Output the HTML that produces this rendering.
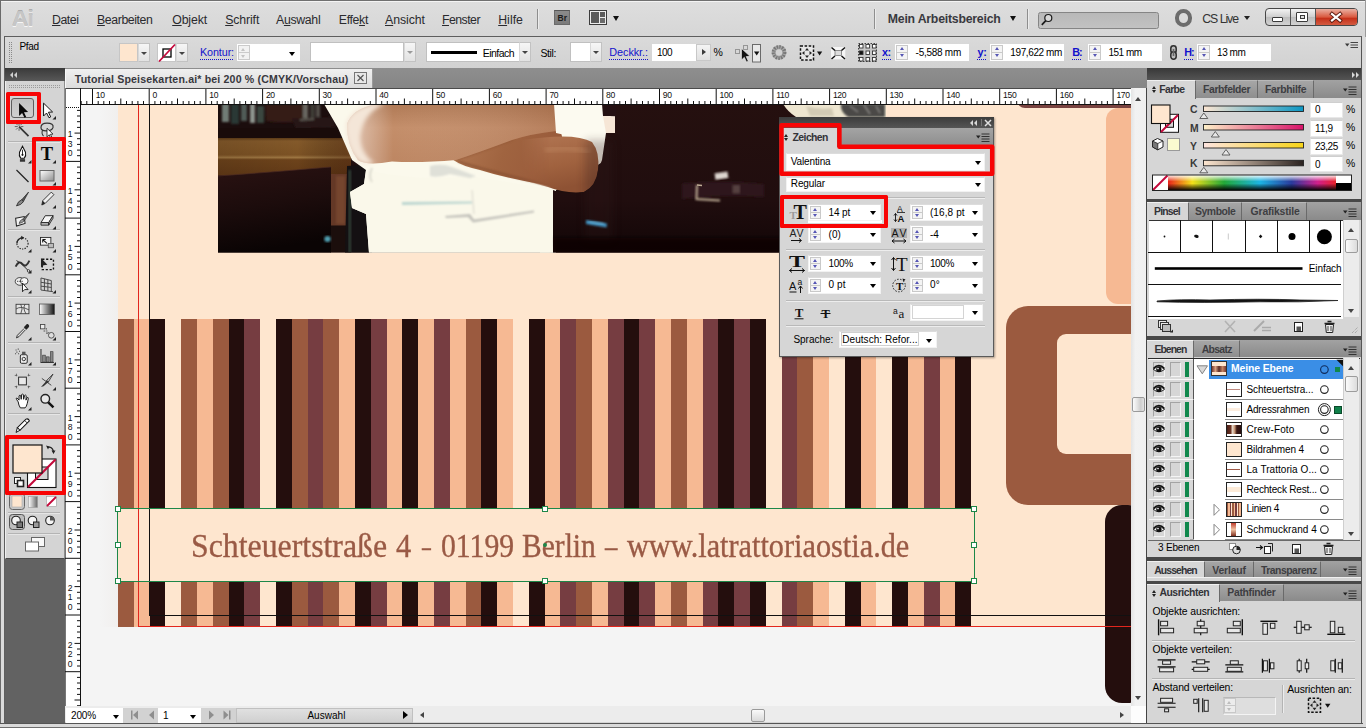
<!DOCTYPE html><html lang="de"><head><meta charset="utf-8"><title>Tutorial Speisekarten.ai</title><style>
*{box-sizing:border-box;margin:0;padding:0}
html,body{width:1366px;height:728px;overflow:hidden;background:#d6d6d6;font-family:"Liberation Sans",sans-serif;font-size:10px;color:#000}
.a{position:absolute}
#app{position:absolute;left:0;top:0;width:1366px;height:728px;overflow:hidden;background:#d4d4d4}
.t{position:absolute;white-space:nowrap;line-height:1}
.red{position:absolute;border:4px solid #f90505;border-radius:2px}
svg{position:absolute;overflow:visible}
u{text-decoration:underline;text-underline-offset:1px}
</style></head><body><div id="app">
<div class="a" style="left:0px;top:0px;width:1366px;height:728px;background:#d4d4d4;"></div>
<div class="a" style="left:0px;top:0px;width:1366px;height:36px;background:linear-gradient(#dedede,#d6d6d6);"></div>
<div class="a" style="left:0px;top:0px;width:1366px;height:1px;background:#707070;"></div>
<div class="a" style="left:0px;top:1px;width:1366px;height:1px;background:#f4f4f4;"></div>
<div class="a" style="left:0px;top:35.6px;width:1366px;height:1.2px;background:#5e5e5e;"></div>
<div class="t" style="left:12px;top:7.500px;font-size:22.500px;font-weight:bold;color:#c6c6c6;letter-spacing:-0.8px;text-shadow:0 1px 0 #f6f6f6,0 -1px 0 #acacac">Ai</div>
<div class="t" style="left:52px;top:14.38px;font-size:12.3px;color:#2a2a2e;letter-spacing:-0.463px;"><u>D</u>atei</div>
<div class="t" style="left:97px;top:14.38px;font-size:12.3px;color:#2a2a2e;letter-spacing:-0.400px;"><u>B</u>earbeiten</div>
<div class="t" style="left:172.2px;top:14.38px;font-size:12.3px;color:#2a2a2e;letter-spacing:-0.125px;"><u>O</u>bjekt</div>
<div class="t" style="left:225.2px;top:14.38px;font-size:12.3px;color:#2a2a2e;letter-spacing:-0.123px;"><u>S</u>chrift</div>
<div class="t" style="left:276px;top:14.38px;font-size:12.3px;color:#2a2a2e;letter-spacing:-0.313px;">A<u>u</u>swahl</div>
<div class="t" style="left:338.8px;top:14.38px;font-size:12.3px;color:#2a2a2e;letter-spacing:-0.337px;">Effe<u>k</u>t</div>
<div class="t" style="left:385px;top:14.38px;font-size:12.3px;color:#2a2a2e;letter-spacing:-0.048px;"><u>A</u>nsicht</div>
<div class="t" style="left:442px;top:14.38px;font-size:12.3px;color:#2a2a2e;letter-spacing:-0.529px;"><u>F</u>enster</div>
<div class="t" style="left:498.2px;top:14.38px;font-size:12.3px;color:#2a2a2e;letter-spacing:0.039px;"><u>H</u>ilfe</div>
<div class="a" style="left:537px;top:9px;width:1px;height:20px;background:#8e8e8e;"></div>
<div class="a" style="left:538px;top:9px;width:1px;height:20px;background:#ececec;"></div>
<div class="a" style="left:554px;top:10px;width:16px;height:15px;background:linear-gradient(#8b8b8b,#7a7a7a);border:1px solid #6a6a6a;border-top-color:#555"></div>
<div class="t" style="left:557.5px;top:13.94px;font-size:8.5px;font-weight:bold;color:#1c1c1c;letter-spacing:0.027px;">Br</div>
<svg style="left:589px;top:10px" width="18" height="15"><rect x="0.5" y="0.5" width="17" height="14" fill="#ececec" stroke="#3c3c3c"/><rect x="2" y="2" width="8" height="11" fill="#5a5a5a"/><rect x="11" y="2" width="5" height="5" fill="#5a5a5a"/><rect x="11" y="8" width="5" height="5" fill="#6a6a6a"/></svg>
<div class="a" style="left:613px;top:16px;width:0;height:0;border-left:3.75px solid transparent;border-right:3.75px solid transparent;border-top:5px solid #111"></div>
<div class="a" style="left:873.5px;top:9px;width:1px;height:20px;background:#8e8e8e;"></div>
<div class="a" style="left:874.5px;top:9px;width:1px;height:20px;background:#ececec;"></div>
<div class="t" style="left:887.8px;top:13.08px;font-size:12.3px;font-weight:bold;color:#393940;letter-spacing:-0.227px;">Mein Arbeitsbereich</div>
<div class="a" style="left:1009.8px;top:16px;width:0;height:0;border-left:3.75px solid transparent;border-right:3.75px solid transparent;border-top:5px solid #111"></div>
<div class="a" style="left:1027px;top:9px;width:1px;height:20px;background:#8e8e8e;"></div>
<div class="a" style="left:1028px;top:9px;width:1px;height:20px;background:#ececec;"></div>
<div class="a" style="left:1038px;top:11.5px;width:121px;height:17px;background:linear-gradient(#b8b8b8,#c2c2c2);border:1px solid #858585;border-radius:2.500px"></div>
<svg style="left:1040px;top:12px" width="14" height="15"><circle cx="8.300" cy="6" r="3.500" fill="#d8d8d8" stroke="#1a1a1a" stroke-width="1.200"/><path d="M5.800 8.600 L1.800 12.800" stroke="#1a1a1a" stroke-width="1.700"/></svg>
<div class="a" style="left:1174.500px;top:9px;width:17.500px;height:17.500px;border:4px solid #6c6c6c;border-radius:9px"></div>
<div class="t" style="left:1202.3px;top:13.08px;font-size:12.3px;color:#333;letter-spacing:-1.053px;">CS Live</div>
<div class="a" style="left:1244px;top:15.5px;width:0;height:0;border-left:3.75px solid transparent;border-right:3.75px solid transparent;border-top:4.5px solid #222"></div>
<div class="a" style="left:1265px;top:8px;width:93px;height:18px;border:1px solid #474747;border-radius:4px;background:linear-gradient(#f2f2f2,#d0d0d0 48%,#bdbdbd 52%,#d2d2d2);overflow:hidden"><div class="a" style="left:24px;top:0;width:1px;height:18px;background:#555"></div><div class="a" style="left:49px;top:0;width:43px;height:18px;background:linear-gradient(#eab0a2,#d9593f 45%,#c5311a 52%,#d8674c);border-left:1px solid #555"></div></div>
<div class="a" style="left:1272px;top:16.5px;width:11px;height:5px;background:#fff;border:1px solid #3a3a3a;border-radius:1px"></div>
<div class="a" style="left:1296px;top:11.5px;width:12px;height:10px;background:#fff;border:1px solid #3a3a3a;border-radius:1px"></div>
<div class="a" style="left:1299.5px;top:14.5px;width:5px;height:4px;background:#e0e0e0;border:1px solid #3a3a3a"></div>
<svg style="left:1329px;top:11px" width="14" height="12"><path d="M3 3 L11 9.500 M11 3 L3 9.500" stroke="#5a1a10" stroke-width="4" stroke-linecap="square"/><path d="M3 3 L11 9.500 M11 3 L3 9.500" stroke="#fff" stroke-width="2.200" stroke-linecap="square"/></svg>
<div class="a" style="left:0px;top:0px;width:1px;height:728px;background:#6a6a6a;"></div>
<div class="a" style="left:1px;top:36px;width:3px;height:692px;background:#dadada;"></div>
<div class="a" style="left:1362px;top:36px;width:4px;height:692px;background:#dadada;"></div>
<div class="a" style="left:1365px;top:0px;width:1px;height:728px;background:#9a9a9a;"></div>
<div class="a" style="left:4px;top:36.7px;width:1358px;height:31px;background:linear-gradient(#dadada,#d2d2d2);border-left:1px solid #8a8a8a"></div>
<div class="a" style="left:4px;top:67.5px;width:1358px;height:1px;background:#9a9a9a;"></div>
<div class="a" style="left:9px;top:42px;width:4px;height:22px;background:repeating-linear-gradient(0deg,#d6d6d6 0 1px,transparent 1px 2px),repeating-linear-gradient(90deg,#8a8a8a 0 1px,transparent 1px 2px)"></div>
<div class="t" style="left:19.4px;top:41.80px;font-size:10px;color:#000;letter-spacing:-0.318px;">Pfad</div>
<div class="a" style="left:118.7px;top:42.8px;width:19.5px;height:19.5px;background:#fee6cf;border:1px solid #c6c6c6"></div>
<div class="a" style="left:138.2px;top:42.8px;width:12px;height:19.5px;background:linear-gradient(#f6f6f6,#e2e2e2);border:1px solid #c2c2c2;border-left-color:#d8d8d8"></div>
<div class="a" style="left:141.2px;top:51.55px;width:0;height:0;border-left:3px solid transparent;border-right:3px solid transparent;border-top:3.5px solid #444"></div>
<div class="a" style="left:156.6px;top:42.8px;width:19.5px;height:19.5px;background:#fff;border:1px solid #c6c6c6"></div>
<svg style="left:156.600px;top:42.800px" width="20" height="20"><rect x="6" y="6" width="8" height="8" fill="none" stroke="#000" stroke-width="1.300"/><path d="M2 18.500 L18 1.500" stroke="#c4093b" stroke-width="1.800"/></svg>
<div class="a" style="left:176.1px;top:42.8px;width:12px;height:19.5px;background:linear-gradient(#f6f6f6,#e2e2e2);border:1px solid #c2c2c2;border-left-color:#d8d8d8"></div>
<div class="a" style="left:179.1px;top:51.55px;width:0;height:0;border-left:3px solid transparent;border-right:3px solid transparent;border-top:3.5px solid #444"></div>
<div class="t" style="left:200px;top:47.23px;font-size:10.8px;color:#1212cc;letter-spacing:-0.117px;">Kontur:</div>
<div class="a" style="left:200px;top:58.500px;width:34px;height:1px;background-image:linear-gradient(90deg,#1212cc 1px,transparent 1px);background-size:2px 1px"></div>
<div class="a" style="left:236.8px;top:43.6px;width:63.5px;height:17.6px;background:#fff;"></div>
<div class="a" style="left:237.8px;top:44.6px;width:12px;height:15.6px;background:#f2f2f2;border:1px solid #cbcbcb"></div>
<div class="a" style="left:238.8px;top:52px;width:10px;height:1px;background:#cbcbcb;"></div>
<div class="a" style="left:241px;top:47.5px;width:0;height:0;border-left:2.5px solid transparent;border-right:2.5px solid transparent;border-bottom:3px solid #c4c4c4"></div>
<div class="a" style="left:241px;top:54.5px;width:0;height:0;border-left:2.5px solid transparent;border-right:2.5px solid transparent;border-top:3px solid #c4c4c4"></div>
<div class="a" style="left:288.5px;top:52px;width:0;height:0;border-left:3.75px solid transparent;border-right:3.75px solid transparent;border-top:4.5px solid #000"></div>
<div class="a" style="left:310.4px;top:42.4px;width:93.2px;height:20px;background:#fff;border:1px solid #c0c0c0"></div>
<div class="a" style="left:403.5px;top:42.4px;width:12px;height:20px;background:linear-gradient(#f6f6f6,#e2e2e2);border:1px solid #c2c2c2;border-left-color:#d8d8d8"></div>
<div class="a" style="left:406.5px;top:51.4px;width:0;height:0;border-left:3px solid transparent;border-right:3px solid transparent;border-top:3.5px solid #9a9a9a"></div>
<div class="a" style="left:425.5px;top:42.4px;width:94px;height:20px;background:#fff;border:1px solid #c0c0c0"></div>
<div class="a" style="left:431px;top:51px;width:45.5px;height:3px;background:#000;"></div>
<div class="t" style="left:482.7px;top:47.68px;font-size:10.5px;color:#000;letter-spacing:-0.532px;">Einfach</div>
<div class="a" style="left:519.3px;top:42.4px;width:12px;height:20px;background:linear-gradient(#f6f6f6,#e2e2e2);border:1px solid #c2c2c2;border-left-color:#d8d8d8"></div>
<div class="a" style="left:522.3px;top:51.4px;width:0;height:0;border-left:3px solid transparent;border-right:3px solid transparent;border-top:3.5px solid #444"></div>
<div class="t" style="left:540.5px;top:47.68px;font-size:10.5px;color:#000;letter-spacing:-0.401px;">Stil:</div>
<div class="a" style="left:569.5px;top:42.4px;width:21px;height:20px;background:#fff;border:1px solid #c0c0c0"></div>
<div class="a" style="left:590px;top:42.4px;width:12px;height:20px;background:linear-gradient(#f6f6f6,#e2e2e2);border:1px solid #c2c2c2;border-left-color:#d8d8d8"></div>
<div class="a" style="left:593px;top:51.4px;width:0;height:0;border-left:3px solid transparent;border-right:3px solid transparent;border-top:3.5px solid #444"></div>
<div class="t" style="left:609.3px;top:47.23px;font-size:10.8px;color:#1212cc;letter-spacing:-0.039px;">Deckkr.:</div>
<div class="a" style="left:609.3px;top:58.500px;width:38.7px;height:1px;background-image:linear-gradient(90deg,#1212cc 1px,transparent 1px);background-size:2px 1px"></div>
<div class="a" style="left:651.9px;top:43.6px;width:44px;height:17.6px;background:#fff;"></div>
<div class="t" style="left:657px;top:47.90px;font-size:10px;color:#000;letter-spacing:-0.562px;">100</div>
<div class="a" style="left:695.6px;top:43.6px;width:15.5px;height:17.6px;background:linear-gradient(#f4f4f4,#e0e0e0);border:1px solid #c8c8c8"></div>
<div class="a" style="left:701.5px;top:48.5px;width:0;height:0;border-top:3.5px solid transparent;border-bottom:3.5px solid transparent;border-left:4.5px solid #3a3a3a"></div>
<div class="t" style="left:713.6px;top:47.48px;font-size:10.5px;color:#000;letter-spacing:-0.436px;">%</div>
<svg style="left:730px;top:40px" width="150" height="26"><g fill="none" stroke="#555" stroke-width="1"><rect x="5.500" y="9.500" width="4" height="4" stroke-dasharray="1 1"/><rect x="13.500" y="5.500" width="4" height="4" stroke-dasharray="1 1"/></g><path d="M11.500 8.500 L11.500 20 L14.300 17.300 L16.500 22 L18.300 21.200 L16.200 16.600 L20 16.300 Z" fill="#111" stroke="#eee" stroke-width="0.600"/><rect x="22.500" y="4.500" width="8" height="17.500" fill="#e9e9e9" stroke="#6a6a6a"/><path d="M24 11.500h5.400l-2.700 4z" fill="#111"/><circle cx="49" cy="12.500" r="7.300" fill="#a6a6a6"/><circle cx="49" cy="12.500" r="5.600" fill="none" stroke="#777" stroke-width="3.600" stroke-dasharray="1.400 1.200"/><circle cx="49" cy="12.500" r="3.200" fill="#d2d2d2"/><rect x="70.500" y="6" width="13" height="14" fill="#e6e6e6" stroke="#111" stroke-width="1.500" stroke-dasharray="2.500 1.600"/><path d="M77 8l2 2.500h-4zM77 18l2-2.500h-4zM72 13l2.500-2v4zM82 13l-2.500-2v4z" fill="#222"/><path d="M87 11.500h5.200l-2.600 4z" fill="#111"/><rect x="101" y="7" width="14.300" height="12.300" fill="#f6f6f6"/><rect x="105" y="10.500" width="6.500" height="5" fill="#ddd" stroke="#777" stroke-width="0.800"/><path d="M101.500 7.500l3.500 3M115 7.500l-3.500 3M101.500 19l3.500-3M115 19l-3.500-3" stroke="#111" stroke-width="1.500"/><g fill="#fff" stroke="#333" stroke-width="0.900"><rect x="128.500" y="3.500" width="18" height="18" fill="#c6c6c6" stroke-dasharray="1.500 1.500"/><rect x="129.5" y="4.5" width="3.500" height="3.500"/><rect x="129.5" y="11" width="3.500" height="3.500" fill="#111"/><rect x="129.5" y="17.5" width="3.500" height="3.500"/><rect x="136" y="4.5" width="3.500" height="3.500"/><rect x="136" y="11" width="3.500" height="3.500"/><rect x="136" y="17.5" width="3.500" height="3.500"/><rect x="142.5" y="4.5" width="3.500" height="3.500"/><rect x="142.5" y="11" width="3.500" height="3.500"/><rect x="142.5" y="17.5" width="3.500" height="3.500"/></g></svg>
<div class="t" style="left:882px;top:47.23px;font-size:10.8px;font-weight:bold;color:#1212cc;letter-spacing:-0.452px;">x:</div>
<div class="a" style="left:882px;top:58.500px;width:8.7px;height:1px;background-image:linear-gradient(90deg,#1212cc 1px,transparent 1px);background-size:2px 1px"></div>
<div class="a" style="left:895.3px;top:43.6px;width:74px;height:17.6px;background:#fff;"></div>
<div class="a" style="left:896.3px;top:44.6px;width:12px;height:15.6px;background:#f4f4f4;border:1px solid #c9c9c9"></div>
<div class="a" style="left:897.3px;top:52px;width:10px;height:1px;background:#c9c9c9;"></div>
<div class="a" style="left:899.8px;top:47.3px;width:0;height:0;border-left:2.5px solid transparent;border-right:2.5px solid transparent;border-bottom:3.2px solid #5656b4"></div>
<div class="a" style="left:899.8px;top:54.3px;width:0;height:0;border-left:2.5px solid transparent;border-right:2.5px solid transparent;border-top:3.2px solid #5656b4"></div>
<div class="t" style="left:915.6px;top:47.90px;font-size:10px;color:#000;letter-spacing:-0.266px;">-5,588 mm</div>
<div class="t" style="left:977.4px;top:47.23px;font-size:10.8px;font-weight:bold;color:#1212cc;letter-spacing:-0.152px;">y:</div>
<div class="a" style="left:977.4px;top:58.500px;width:9.3px;height:1px;background-image:linear-gradient(90deg,#1212cc 1px,transparent 1px);background-size:2px 1px"></div>
<div class="a" style="left:990.4px;top:43.6px;width:73.8px;height:17.6px;background:#fff;"></div>
<div class="a" style="left:991.4px;top:44.6px;width:12px;height:15.6px;background:#f4f4f4;border:1px solid #c9c9c9"></div>
<div class="a" style="left:992.4px;top:52px;width:10px;height:1px;background:#c9c9c9;"></div>
<div class="a" style="left:994.9px;top:47.3px;width:0;height:0;border-left:2.5px solid transparent;border-right:2.5px solid transparent;border-bottom:3.2px solid #5656b4"></div>
<div class="a" style="left:994.9px;top:54.3px;width:0;height:0;border-left:2.5px solid transparent;border-right:2.5px solid transparent;border-top:3.2px solid #5656b4"></div>
<div class="t" style="left:1010.3px;top:47.90px;font-size:10px;color:#000;letter-spacing:-0.389px;">197,622 mm</div>
<div class="t" style="left:1072.3px;top:47.23px;font-size:10.8px;font-weight:bold;color:#1212cc;letter-spacing:-1.098px;">B:</div>
<div class="a" style="left:1072.3px;top:58.500px;width:9.2px;height:1px;background-image:linear-gradient(90deg,#1212cc 1px,transparent 1px);background-size:2px 1px"></div>
<div class="a" style="left:1088.2px;top:43.6px;width:74.1px;height:17.6px;background:#fff;"></div>
<div class="a" style="left:1089.2px;top:44.6px;width:12px;height:15.6px;background:#f4f4f4;border:1px solid #c9c9c9"></div>
<div class="a" style="left:1090.2px;top:52px;width:10px;height:1px;background:#c9c9c9;"></div>
<div class="a" style="left:1092.7px;top:47.3px;width:0;height:0;border-left:2.5px solid transparent;border-right:2.5px solid transparent;border-bottom:3.2px solid #5656b4"></div>
<div class="a" style="left:1092.7px;top:54.3px;width:0;height:0;border-left:2.5px solid transparent;border-right:2.5px solid transparent;border-top:3.2px solid #5656b4"></div>
<div class="t" style="left:1108.5px;top:47.90px;font-size:10px;color:#000;letter-spacing:-0.504px;">151 mm</div>
<svg style="left:1169px;top:45px" width="9" height="15"><rect x="1.800" y="0.800" width="5.400" height="7.500" rx="2.700" fill="#bbb" stroke="#2e2e2e" stroke-width="1.500"/><rect x="1.800" y="6.700" width="5.400" height="7.500" rx="2.700" fill="#bbb" stroke="#2e2e2e" stroke-width="1.500"/><path d="M4.500 4v7" stroke="#666" stroke-width="1.600"/></svg>
<div class="t" style="left:1184.2px;top:47.23px;font-size:10.8px;font-weight:bold;color:#1212cc;letter-spacing:-0.898px;">H:</div>
<div class="a" style="left:1184.2px;top:58.500px;width:9.6px;height:1px;background-image:linear-gradient(90deg,#1212cc 1px,transparent 1px);background-size:2px 1px"></div>
<div class="a" style="left:1197.2px;top:43.6px;width:74.3px;height:17.6px;background:#fff;"></div>
<div class="a" style="left:1198.2px;top:44.6px;width:12px;height:15.6px;background:#f4f4f4;border:1px solid #c9c9c9"></div>
<div class="a" style="left:1199.2px;top:52px;width:10px;height:1px;background:#c9c9c9;"></div>
<div class="a" style="left:1201.7px;top:47.3px;width:0;height:0;border-left:2.5px solid transparent;border-right:2.5px solid transparent;border-bottom:3.2px solid #5656b4"></div>
<div class="a" style="left:1201.7px;top:54.3px;width:0;height:0;border-left:2.5px solid transparent;border-right:2.5px solid transparent;border-top:3.2px solid #5656b4"></div>
<div class="t" style="left:1217px;top:47.90px;font-size:10px;color:#000;letter-spacing:-0.432px;">13 mm</div>
<svg style="left:1345px;top:40.500px" width="14" height="9"><path d="M0 2.500h4.500l-2.250 3z" fill="#3a3a3a"/><path d="M5.500 1.500h7.500M5.500 4h7.500M5.500 6.500h7.500" stroke="#444" stroke-width="1.100"/></svg>
<div class="a" id="canvas" style="left:80px;top:104px;width:1051px;height:603px;background:#f4f4f4;overflow:hidden">
<div class="a" style="left:20px;top:0px;width:18px;height:523px;background:linear-gradient(90deg,#f4f4f4,#f1efee);"></div>
<div class="a" style="left:37.7px;top:0px;width:1014px;height:522.5px;background:#fee6cf;"></div>
<div class="a" style="left:937px;top:-12px;width:130px;height:15.5px;background:#7a4340;border-radius:9px"></div>
<div class="a" style="left:1025.8px;top:3.8px;width:40px;height:196.7px;background:#f6b993;border-radius:12px"></div>
<div class="a" style="left:926px;top:202px;width:160px;height:198.5px;background:#9b5a3f;border-radius:22px"></div>
<div class="a" style="left:977px;top:230px;width:100px;height:119.5px;background:#fee6cf;border-radius:9px"></div>
<div class="a" style="left:1025px;top:400.5px;width:40px;height:198.5px;background:#240e0d;border-radius:17px"></div>
<div class="a" style="left:37.8px;top:214.5px;width:853.2px;height:308.5px;background:linear-gradient(90deg,#9b5a3f 0.00px,#9b5a3f 15.80px,#f6b993 15.80px,#f6b993 31.60px,#240e0d 31.60px,#240e0d 47.40px,#fee6cf 47.40px,#fee6cf 63.20px,#9b5a3f 63.20px,#9b5a3f 79.00px,#f6b993 79.00px,#f6b993 94.80px,#9b5a3f 94.80px,#9b5a3f 110.60px,#240e0d 110.60px,#240e0d 126.40px,#763d41 126.40px,#763d41 142.20px,#fee6cf 142.20px,#fee6cf 158.00px,#240e0d 158.00px,#240e0d 173.80px,#9b5a3f 173.80px,#9b5a3f 189.60px,#763d41 189.60px,#763d41 205.40px,#9b5a3f 205.40px,#9b5a3f 221.20px,#f6b993 221.20px,#f6b993 237.00px,#240e0d 237.00px,#240e0d 252.80px,#763d41 252.80px,#763d41 268.60px,#f6b993 268.60px,#f6b993 284.40px,#240e0d 284.40px,#240e0d 300.20px,#f6b993 300.20px,#f6b993 316.00px,#763d41 316.00px,#763d41 331.80px,#f6b993 331.80px,#f6b993 347.60px,#9b5a3f 347.60px,#9b5a3f 363.40px,#240e0d 363.40px,#240e0d 379.20px,#f6b993 379.20px,#f6b993 395.00px,#fee6cf 395.00px,#fee6cf 410.80px,#240e0d 410.80px,#240e0d 426.60px,#f6b993 426.60px,#f6b993 442.40px,#763d41 442.40px,#763d41 458.20px,#9b5a3f 458.20px,#9b5a3f 474.00px,#f6b993 474.00px,#f6b993 489.80px,#763d41 489.80px,#763d41 505.60px,#240e0d 505.60px,#240e0d 521.40px,#763d41 521.40px,#763d41 537.20px,#f6b993 537.20px,#f6b993 553.00px,#9b5a3f 553.00px,#9b5a3f 568.80px,#f6b993 568.80px,#f6b993 584.60px,#763d41 584.60px,#763d41 600.40px,#240e0d 600.40px,#240e0d 616.20px,#763d41 616.20px,#763d41 632.00px,#240e0d 632.00px,#240e0d 647.80px,#fee6cf 647.80px,#fee6cf 663.60px,#763d41 663.60px,#763d41 679.40px,#9b5a3f 679.40px,#9b5a3f 695.20px,#f6b993 695.20px,#f6b993 711.00px,#fee6cf 711.00px,#fee6cf 726.80px,#240e0d 726.80px,#240e0d 742.60px,#f6b993 742.60px,#f6b993 758.40px,#fee6cf 758.40px,#fee6cf 774.20px,#240e0d 774.20px,#240e0d 790.00px,#f6b993 790.00px,#f6b993 805.80px,#763d41 805.80px,#763d41 821.60px,#f6b993 821.60px,#f6b993 837.40px,#240e0d 837.40px,#240e0d 853.20px);"></div>
<svg style="left:138px;top:0" width="668" height="148.500" viewBox="218 104 668 148.500" preserveAspectRatio="none">
<defs>
<filter id="b1" x="-10%" y="-10%" width="120%" height="120%"><feGaussianBlur stdDeviation="1"/></filter>
<filter id="b2" x="-20%" y="-20%" width="140%" height="140%"><feGaussianBlur stdDeviation="2"/></filter>
<filter id="b4" x="-30%" y="-30%" width="160%" height="160%"><feGaussianBlur stdDeviation="4"/></filter>
<linearGradient id="wood" x1="0" y1="0" x2="0" y2="1"><stop offset="0" stop-color="#5e3c18"/><stop offset="0.080" stop-color="#83592a"/><stop offset="0.450" stop-color="#7c5224"/><stop offset="0.520" stop-color="#9c7440"/><stop offset="0.580" stop-color="#6d431b"/><stop offset="1" stop-color="#623a17"/></linearGradient>
<linearGradient id="woodx" x1="0" y1="0" x2="1" y2="0"><stop offset="0" stop-color="#000" stop-opacity="0.100"/><stop offset="0.600" stop-color="#000" stop-opacity="0"/><stop offset="1" stop-color="#3a1408" stop-opacity="0.350"/></linearGradient>
<linearGradient id="chair" x1="0" y1="0" x2="0.200" y2="1"><stop offset="0" stop-color="#2a1212"/><stop offset="0.500" stop-color="#1c0c0c"/><stop offset="1" stop-color="#0a0404"/></linearGradient>
<linearGradient id="dk" x1="0" y1="0" x2="0" y2="1"><stop offset="0" stop-color="#25100f"/><stop offset="0.650" stop-color="#200d0e"/><stop offset="1" stop-color="#120607"/></linearGradient>
<linearGradient id="arm" x1="0" y1="0" x2="0" y2="1"><stop offset="0" stop-color="#b07a56"/><stop offset="0.400" stop-color="#c48e6a"/><stop offset="1" stop-color="#bd8662"/></linearGradient>
<linearGradient id="armx" x1="0" y1="0" x2="1" y2="0"><stop offset="0" stop-color="#fff" stop-opacity="0.550"/><stop offset="0.220" stop-color="#fff" stop-opacity="0"/><stop offset="1" stop-color="#6a2a10" stop-opacity="0.150"/></linearGradient>
<linearGradient id="arm2" x1="0" y1="0" x2="1" y2="0.200"><stop offset="0" stop-color="#b47a54"/><stop offset="0.500" stop-color="#a06440"/><stop offset="1" stop-color="#98593a"/></linearGradient>
<linearGradient id="handf" x1="0" y1="0" x2="1" y2="0"><stop offset="0" stop-color="#fff" stop-opacity="0"/><stop offset="0.350" stop-color="#fff" stop-opacity="1"/></linearGradient><mask id="hm"><rect x="520" y="120" width="90" height="80" fill="url(#handf)"/></mask><linearGradient id="hand" x1="0" y1="0" x2="0.300" y2="1"><stop offset="0" stop-color="#b27653"/><stop offset="0.600" stop-color="#a0623f"/><stop offset="1" stop-color="#8e5234"/></linearGradient>
<clipPath id="pc"><rect x="218" y="104" width="668" height="148.500"/></clipPath>
</defs>
<g clip-path="url(#pc)">
<rect x="218" y="104" width="668" height="149" fill="#1e0d0d"/>
<!-- top-left dark band with objects -->
<rect x="218" y="104" width="140" height="35" fill="#1b0d0d"/>
<g filter="url(#b1)">
<rect x="222" y="104" width="7" height="18" fill="#7f8f88" opacity="0.850"/><rect x="231" y="104" width="8" height="20" fill="#2c3834"/><rect x="241" y="104" width="6" height="17" fill="#55645e" opacity="0.900"/><rect x="250" y="104" width="5" height="19" fill="#9aa39b" opacity="0.900"/><rect x="257" y="106" width="7" height="17" fill="#3a4640"/>
<path d="M265 104 L304 104 L303 121 Q284 124 266 121 Z" fill="#341a13"/>
<rect x="303" y="104" width="5" height="15" fill="#74746c" opacity="0.850"/><rect x="310" y="104" width="5" height="16" fill="#3c3a36"/><rect x="316" y="104" width="4" height="13" fill="#605e58" opacity="0.800"/>
<path d="M292 119 L333 117 L336 127 L296 129 Z" fill="#261716"/>
<path d="M300 119 L314 118 L314 120 L300 121Z" fill="#5a5650"/>
</g>
<rect x="218" y="128" width="136" height="10.500" fill="#190b0a"/>
<!-- table -->
<rect x="218" y="138" width="133" height="37.500" fill="url(#wood)"/>
<rect x="218" y="138" width="133" height="37.500" fill="url(#woodx)"/>
<!-- table leg -->
<rect x="330" y="174" width="21" height="52" fill="#643826"/>
<rect x="336" y="176" width="9" height="48" fill="#74442e" filter="url(#b1)"/>
<rect x="330" y="225.500" width="21" height="27" fill="#1b0e0c"/>
<!-- chair back -->
<path d="M218 176 Q275 172 331 167 L331 253 L218 253 Z" fill="url(#chair)"/>
<path d="M218 176 Q275 172 331 167" fill="none" stroke="#4a2a22" stroke-width="1" opacity="0.700"/>
<!-- chef dark trousers strip -->
<path d="M347 166 L372 164 L372 253 L345 253 Z" fill="#141012"/>
<rect x="348.500" y="170" width="2.500" height="83" fill="#34463e" opacity="0.900" filter="url(#b1)"/>
<ellipse cx="327.500" cy="239" rx="3.200" ry="3" fill="#4f9fb0" filter="url(#b1)"/>
<!-- white clothes -->
<path d="M324 104 L612 104 L606 160 L556 190 L556 253 L369 253 L366 214 L352 208 L350 192 L364 184 L366 170 L352 160 L338 128 Z" fill="#fbf9ec"/>
<path d="M366 170 Q420 182 470 176 L556 190 L556 253 L369 253 L366 214 L352 208 L350 192 L364 184Z" fill="#faf8ea"/>
<g filter="url(#b1)">
<path d="M430 166 Q442 163 452 167 L476 176 L470 178 L450 174 Q438 178 430 176Z" fill="#dfe0d8"/>
<path d="M402 202 L472 201.500 L472 203.500 L402 205z" fill="#bcd6d0"/>
<path d="M445 216 L470 214 L474 219.500 L534 210.500 L534 212.500 L473 222.500 L468 217 L446 218z" fill="#c4c3bc"/>
<path d="M472 190 L474 214" stroke="#d8d6cc" stroke-width="1" fill="none"/>
<path d="M372 168 Q368 176 372 182" stroke="#dedcd0" stroke-width="2" fill="none"/>
</g>
<!-- forearm 2 (darker) -->
<path d="M450 158 Q484 146 513 135 Q535 128 560 126 L572 190 Q556 188 540 184 Q505 178 480 170 Q462 166 455 161 Z" fill="url(#arm2)"/>
<path d="M458 161.500 Q500 174 556 187" fill="none" stroke="#6e3c24" stroke-width="1.600" opacity="0.550" filter="url(#b1)"/>
<path d="M456 160 Q485 150 514 139" fill="none" stroke="#8a5030" stroke-width="1.400" opacity="0.600" filter="url(#b1)"/>
<!-- forearm 1 (light) -->
<path d="M347 124 Q352 109 376 104 L556 104 L556 131 Q530 134 512 140 Q480 152 456 160 Q420 163 392 161.500 Q366 166 358 160 Q347 146 347 124 Z" fill="url(#arm)"/>
<path d="M347 124 Q352 109 376 104 L556 104 L556 131 Q530 134 512 140 Q480 152 456 160 Q420 163 392 161.500 Q366 166 358 160 Q347 146 347 124 Z" fill="url(#armx)"/>
<path d="M346 124 Q351 108 376 103 L384 104 Q362 114 360 138 Q361 154 374 163 Q363 165 357 159 Q346 146 346 124Z" fill="#f4e6d8" filter="url(#b2)"/>
<path d="M347 112 Q352 104 366 104 L352 104 L344 118Z" fill="#fbf9ec"/>
<!-- sleeve (white) -->
<path d="M554 104 L602 104 L603 116 L615 116.500 L615 133 L606 133 L602 160 L597 152 Q590 140 556 133 Z" fill="#fcfaf0"/>
<path d="M603 116 L615 116.500 L615 133 L606 133Z" fill="#f6e6d6"/>
<!-- fist -->
<path d="M522 140 Q575 132 592 142 Q600 152 598 170 Q596 186 584 192 Q566 194 548 187 L522 180 Z" fill="url(#hand)" mask="url(#hm)"/>
<path d="M545 150 Q570 146 590 152" fill="none" stroke="#c08862" stroke-width="5" opacity="0.500" filter="url(#b2)"/>
<!-- dark right person -->
<path d="M612 104 L886 104 L886 253 L553 253 L553 190 Q566 196 584 192 Q597 186 598 170 L602 160 L606 133 L615 133 L615 116 Z" fill="url(#dk)"/>
<path d="M602 104 L616 104 L616 116 L603 116Z" fill="#241012"/>
<rect x="585" y="140" width="28" height="100" fill="#331a1c" opacity="0.280" filter="url(#b4)"/>
<rect x="553" y="238" width="333" height="15" fill="#0f0506" opacity="0.750" filter="url(#b2)"/>
<!-- white lower left remainder under fist -->
<path d="M540 186 L552 189 L553 253 L540 253Z" fill="#faf8ea"/>
<!-- belt -->
<path d="M682 183.500 Q720 180 764 184 L764 197 Q720 194 682 199 Z" fill="#2e191b" filter="url(#b1)"/>
<path d="M697 185 L696.500 199 L720 200.500" fill="none" stroke="#bfae96" stroke-width="2" filter="url(#b1)"/>
<path d="M697 185 L702 185.500" fill="none" stroke="#bfae96" stroke-width="1.500"/>
<rect x="715" y="172.500" width="13" height="6.500" fill="#ddd6d0" filter="url(#b1)" transform="rotate(-8 721 176)"/>
<rect x="732.500" y="185" width="7.500" height="8.500" fill="#55403f" filter="url(#b1)"/>
<path d="M586 220 L607 223.500 L606.500 227.500 L586 224Z" fill="#3f8fbd" filter="url(#b1)"/>
<path d="M589 221.500 L604 224" stroke="#7cc4e8" stroke-width="1.200" filter="url(#b1)"/>
<!-- top right light stuff -->
<path d="M783 104 L886 104 L886 117 L796 117 Q788 112 783 104Z" fill="#eee6d0"/>
<path d="M841 104 L885 104 L885 117 L848 117 Q840 112 841 104Z" fill="#4c4a47" filter="url(#b1)"/>
<path d="M850 106 L858 112 M864 105 L870 114 M876 106 L880 113" stroke="#8a8884" stroke-width="1.500" filter="url(#b1)"/>
<path d="M806 106 Q818 110 832 108 L834 116 L810 116Z" fill="#d2cab4" filter="url(#b1)"/>
</g>
</svg>
<div class="a" style="left:37.4px;top:404.5px;width:856.2px;height:72.5px;background:#fee6cf;"></div>
<div class="t" style="left:0;top:424.82px;width:900px;height:34px;font-family:'Liberation Serif',serif;font-size:34px;color:#9a5a45;-webkit-text-stroke:0.35px #9a5a45"><span style="position:absolute;left:111.2px;top:0;transform-origin:0 0;transform:scaleX(0.9357)">Schteuertstraße</span> <span style="position:absolute;left:315.7px;top:0;transform-origin:0 0;transform:scaleX(0.8941)">4</span> <span style="position:absolute;left:341.9px;top:0;transform-origin:0 0;transform:scaleX(0.5235)">–</span> <span style="position:absolute;left:360.5px;top:0;transform-origin:0 0;transform:scaleX(0.8742)">01199</span> <span style="position:absolute;left:442.2px;top:0;transform-origin:0 0;transform:scaleX(0.8684)">Berlin</span> <span style="position:absolute;left:525.2px;top:0;transform-origin:0 0;transform:scaleX(0.7294)">–</span> <span style="position:absolute;left:546.8px;top:0;transform-origin:0 0;transform:scaleX(0.8908)">www.latrattoriaostia.de</span></div>
<div class="a" style="left:58px;top:0px;width:1px;height:523px;background:#e3261d;"></div>
<div class="a" style="left:69px;top:0px;width:1.3px;height:512px;background:#111;"></div>
<div class="a" style="left:69px;top:510.6px;width:982px;height:1.2px;background:#111;"></div>
<div class="a" style="left:58px;top:521.8px;width:993px;height:1.2px;background:#e3261d;"></div>
<div class="a" style="left:37px;top:404px;width:857.5px;height:73.5px;border:1.2px solid #1d8748"></div>
<div class="a" style="left:34.5px;top:401.6px;width:6px;height:6px;background:#fff;border:1px solid #1d8748"></div>
<div class="a" style="left:34.5px;top:437.5px;width:6px;height:6px;background:#fff;border:1px solid #1d8748"></div>
<div class="a" style="left:34.5px;top:473.8px;width:6px;height:6px;background:#fff;border:1px solid #1d8748"></div>
<div class="a" style="left:462px;top:401.6px;width:6px;height:6px;background:#fff;border:1px solid #1d8748"></div>
<div class="a" style="left:463px;top:438.5px;width:4px;height:4px;background:#1d8748;border-radius:2px"></div>
<div class="a" style="left:462px;top:473.8px;width:6px;height:6px;background:#fff;border:1px solid #1d8748"></div>
<div class="a" style="left:890.8px;top:401.6px;width:6px;height:6px;background:#fff;border:1px solid #1d8748"></div>
<div class="a" style="left:890.8px;top:437.5px;width:6px;height:6px;background:#fff;border:1px solid #1d8748"></div>
<div class="a" style="left:890.8px;top:473.8px;width:6px;height:6px;background:#fff;border:1px solid #1d8748"></div>
</div>
<div class="a" style="left:64px;top:68px;width:1083px;height:20.5px;background:linear-gradient(#8e8e8e,#858585);"></div>
<div class="a" style="left:65px;top:68.5px;width:307.5px;height:19.5px;background:linear-gradient(#f0f0f0,#dcdcdc);border-right:1px solid #9a9a9a;border-left:1px solid #f8f8f8"></div>
<div class="t" style="left:74.8px;top:73.80px;font-size:10.6px;font-weight:bold;color:#38383e;letter-spacing:0.157px;">Tutorial Speisekarten.ai* bei 200 % (CMYK/Vorschau)</div>
<div class="a" style="left:354px;top:72px;width:12.5px;height:12px;background:#e8e8e8;border:1px solid #777"></div>
<svg style="left:354px;top:72px" width="13" height="12"><path d="M3.500 3 L9.500 9 M9.500 3 L3.500 9" stroke="#555" stroke-width="1.200"/></svg>
<div class="a" style="left:65px;top:88px;width:1066px;height:16.6px;background:#fff;"></div>
<div class="a" style="left:65px;top:88px;width:1066px;height:1px;background:#4a4a4a;"></div>
<div class="a" style="left:65px;top:104px;width:1066px;height:1px;background:#111;"></div>
<div class="a" style="left:65px;top:104px;width:15.6px;height:603px;background:#fff;"></div>
<div class="a" style="left:80px;top:88px;width:1px;height:619px;background:#111;"></div>
<div class="a" style="left:64.5px;top:88px;width:1px;height:619px;background:#777;"></div>
<svg style="left:0;top:0" width="1366" height="728"><path d="M92.5 89V104M149.2 89V104M205.9 89V104M262.6 89V104M319.3 89V104M376.0 89V104M432.7 89V104M489.4 89V104M546.1 89V104M602.8 89V104M659.5 89V104M716.2 89V104M772.9 89V104M829.6 89V104M886.3 89V104M943.0 89V104M999.7 89V104M1056.4 89V104M1113.1 89V104" stroke="#111" stroke-width="1"/><path d="M120.8 98.5V104M177.5 98.5V104M234.2 98.5V104M290.9 98.5V104M347.6 98.5V104M404.4 98.5V104M461.1 98.5V104M517.8 98.5V104M574.5 98.5V104M631.1 98.5V104M687.8 98.5V104M744.5 98.5V104M801.2 98.5V104M858.0 98.5V104M914.7 98.5V104M971.3 98.5V104M1028.0 98.5V104M1084.8 98.5V104M81.2 101V104M86.8 101V104M98.2 101V104M103.8 101V104M109.5 101V104M115.2 101V104M126.5 101V104M132.2 101V104M137.9 101V104M143.5 101V104M154.9 101V104M160.5 101V104M166.2 101V104M171.9 101V104M183.2 101V104M188.9 101V104M194.6 101V104M200.2 101V104M211.6 101V104M217.2 101V104M222.9 101V104M228.6 101V104M239.9 101V104M245.6 101V104M251.3 101V104M256.9 101V104M268.3 101V104M273.9 101V104M279.6 101V104M285.3 101V104M296.6 101V104M302.3 101V104M308.0 101V104M313.6 101V104M325.0 101V104M330.6 101V104M336.3 101V104M342.0 101V104M353.3 101V104M359.0 101V104M364.7 101V104M370.3 101V104M381.7 101V104M387.3 101V104M393.0 101V104M398.7 101V104M410.0 101V104M415.7 101V104M421.4 101V104M427.0 101V104M438.4 101V104M444.0 101V104M449.7 101V104M455.4 101V104M466.7 101V104M472.4 101V104M478.1 101V104M483.7 101V104M495.1 101V104M500.7 101V104M506.4 101V104M512.1 101V104M523.4 101V104M529.1 101V104M534.8 101V104M540.4 101V104M551.8 101V104M557.4 101V104M563.1 101V104M568.8 101V104M580.1 101V104M585.8 101V104M591.5 101V104M597.1 101V104M608.5 101V104M614.1 101V104M619.8 101V104M625.5 101V104M636.8 101V104M642.5 101V104M648.2 101V104M653.8 101V104M665.2 101V104M670.8 101V104M676.5 101V104M682.2 101V104M693.5 101V104M699.2 101V104M704.9 101V104M710.5 101V104M721.9 101V104M727.5 101V104M733.2 101V104M738.9 101V104M750.2 101V104M755.9 101V104M761.6 101V104M767.2 101V104M778.6 101V104M784.2 101V104M789.9 101V104M795.6 101V104M806.9 101V104M812.6 101V104M818.3 101V104M823.9 101V104M835.3 101V104M840.9 101V104M846.6 101V104M852.3 101V104M863.6 101V104M869.3 101V104M875.0 101V104M880.6 101V104M892.0 101V104M897.6 101V104M903.3 101V104M909.0 101V104M920.3 101V104M926.0 101V104M931.7 101V104M937.3 101V104M948.7 101V104M954.3 101V104M960.0 101V104M965.7 101V104M977.0 101V104M982.7 101V104M988.4 101V104M994.0 101V104M1005.4 101V104M1011.0 101V104M1016.7 101V104M1022.4 101V104M1033.7 101V104M1039.4 101V104M1045.1 101V104M1050.7 101V104M1062.1 101V104M1067.7 101V104M1073.4 101V104M1079.1 101V104M1090.4 101V104M1096.1 101V104M1101.8 101V104M1107.4 101V104M1118.8 101V104M1124.4 101V104" stroke="#111" stroke-width="1"/>
<path d="M77 705.7H80M74.500 700.0H80M77 694.4H80M77 688.7H80M77 683.0H80M77 677.4H80M65 671.7H80M77 666.0H80M77 660.4H80M77 654.7H80M77 649.0H80M74.500 643.4H80M77 637.7H80M77 632.0H80M77 626.3H80M77 620.7H80M65 615.0H80M77 609.3H80M77 603.7H80M77 598.0H80M77 592.3H80M74.500 586.6H80M77 581.0H80M77 575.3H80M77 569.6H80M77 564.0H80M65 558.3H80M77 552.6H80M77 547.0H80M77 541.3H80M77 535.6H80M74.500 530.0H80M77 524.3H80M77 518.6H80M77 512.9H80M77 507.3H80M65 501.6H80M77 495.9H80M77 490.3H80M77 484.6H80M77 478.9H80M74.500 473.2H80M77 467.6H80M77 461.9H80M77 456.2H80M77 450.6H80M65 444.9H80M77 439.2H80M77 433.6H80M77 427.9H80M77 422.2H80M74.500 416.6H80M77 410.9H80M77 405.2H80M77 399.5H80M77 393.9H80M65 388.2H80M77 382.5H80M77 376.9H80M77 371.2H80M77 365.5H80M74.500 359.9H80M77 354.2H80M77 348.5H80M77 342.8H80M77 337.2H80M65 331.5H80M77 325.8H80M77 320.2H80M77 314.5H80M77 308.8H80M74.500 303.1H80M77 297.5H80M77 291.8H80M77 286.1H80M77 280.5H80M65 274.8H80M77 269.1H80M77 263.5H80M77 257.8H80M77 252.1H80M74.500 246.4H80M77 240.8H80M77 235.1H80M77 229.4H80M77 223.8H80M65 218.1H80M77 212.4H80M77 206.8H80M77 201.1H80M77 195.4H80M74.500 189.8H80M77 184.1H80M77 178.4H80M77 172.7H80M77 167.1H80M65 161.4H80M77 155.7H80M77 150.1H80M77 144.4H80M77 138.7H80M74.500 133.1H80M77 127.4H80M77 121.7H80M77 116.0H80M77 110.4H80" stroke="#111" stroke-width="1"/>
<path d="M66 107.500H80" stroke="#111" stroke-width="1" stroke-dasharray="1 1"/></svg>
<div class="t" style="left:95.8px;top:91.46px;font-size:8.6px;color:#111;letter-spacing:-0.300px;">10</div>
<div class="t" style="left:152.5px;top:91.46px;font-size:8.6px;color:#111;letter-spacing:-0.300px;">0</div>
<div class="t" style="left:209.2px;top:91.46px;font-size:8.6px;color:#111;letter-spacing:-0.300px;">10</div>
<div class="t" style="left:265.9px;top:91.46px;font-size:8.6px;color:#111;letter-spacing:-0.300px;">20</div>
<div class="t" style="left:322.6px;top:91.46px;font-size:8.6px;color:#111;letter-spacing:-0.300px;">30</div>
<div class="t" style="left:379.3px;top:91.46px;font-size:8.6px;color:#111;letter-spacing:-0.300px;">40</div>
<div class="t" style="left:436px;top:91.46px;font-size:8.6px;color:#111;letter-spacing:-0.300px;">50</div>
<div class="t" style="left:492.7px;top:91.46px;font-size:8.6px;color:#111;letter-spacing:-0.300px;">60</div>
<div class="t" style="left:549.4px;top:91.46px;font-size:8.6px;color:#111;letter-spacing:-0.300px;">70</div>
<div class="t" style="left:606.1px;top:91.46px;font-size:8.6px;color:#111;letter-spacing:-0.300px;">80</div>
<div class="t" style="left:662.8px;top:91.46px;font-size:8.6px;color:#111;letter-spacing:-0.300px;">90</div>
<div class="t" style="left:719.5px;top:91.46px;font-size:8.6px;color:#111;letter-spacing:-0.300px;">100</div>
<div class="t" style="left:776.2px;top:91.46px;font-size:8.6px;color:#111;letter-spacing:-0.300px;">110</div>
<div class="t" style="left:832.9px;top:91.46px;font-size:8.6px;color:#111;letter-spacing:-0.300px;">120</div>
<div class="t" style="left:889.6px;top:91.46px;font-size:8.6px;color:#111;letter-spacing:-0.300px;">130</div>
<div class="t" style="left:946.3px;top:91.46px;font-size:8.6px;color:#111;letter-spacing:-0.300px;">140</div>
<div class="t" style="left:1003px;top:91.46px;font-size:8.6px;color:#111;letter-spacing:-0.300px;">150</div>
<div class="t" style="left:1059.7px;top:91.46px;font-size:8.6px;color:#111;letter-spacing:-0.300px;">160</div>
<div class="t" style="left:1116.4px;top:91.46px;font-size:8.6px;color:#111;letter-spacing:-0.300px;">170</div>
<div class="t" style="left:67.8px;top:130.26px;font-size:8.6px;color:#111;">1</div>
<div class="t" style="left:67.8px;top:139.86px;font-size:8.6px;color:#111;">3</div>
<div class="t" style="left:67.8px;top:149.46px;font-size:8.6px;color:#111;">0</div>
<div class="t" style="left:67.8px;top:186.96px;font-size:8.6px;color:#111;">1</div>
<div class="t" style="left:67.8px;top:196.56px;font-size:8.6px;color:#111;">4</div>
<div class="t" style="left:67.8px;top:206.16px;font-size:8.6px;color:#111;">0</div>
<div class="t" style="left:67.8px;top:243.66px;font-size:8.6px;color:#111;">1</div>
<div class="t" style="left:67.8px;top:253.26px;font-size:8.6px;color:#111;">5</div>
<div class="t" style="left:67.8px;top:262.86px;font-size:8.6px;color:#111;">0</div>
<div class="t" style="left:67.8px;top:300.36px;font-size:8.6px;color:#111;">1</div>
<div class="t" style="left:67.8px;top:309.96px;font-size:8.6px;color:#111;">6</div>
<div class="t" style="left:67.8px;top:319.56px;font-size:8.6px;color:#111;">0</div>
<div class="t" style="left:67.8px;top:357.06px;font-size:8.6px;color:#111;">1</div>
<div class="t" style="left:67.8px;top:366.66px;font-size:8.6px;color:#111;">7</div>
<div class="t" style="left:67.8px;top:376.26px;font-size:8.6px;color:#111;">0</div>
<div class="t" style="left:67.8px;top:413.76px;font-size:8.6px;color:#111;">1</div>
<div class="t" style="left:67.8px;top:423.36px;font-size:8.6px;color:#111;">8</div>
<div class="t" style="left:67.8px;top:432.96px;font-size:8.6px;color:#111;">0</div>
<div class="t" style="left:67.8px;top:470.46px;font-size:8.6px;color:#111;">1</div>
<div class="t" style="left:67.8px;top:480.06px;font-size:8.6px;color:#111;">9</div>
<div class="t" style="left:67.8px;top:489.66px;font-size:8.6px;color:#111;">0</div>
<div class="t" style="left:67.8px;top:527.16px;font-size:8.6px;color:#111;">2</div>
<div class="t" style="left:67.8px;top:536.76px;font-size:8.6px;color:#111;">0</div>
<div class="t" style="left:67.8px;top:546.36px;font-size:8.6px;color:#111;">0</div>
<div class="t" style="left:67.8px;top:583.86px;font-size:8.6px;color:#111;">2</div>
<div class="t" style="left:67.8px;top:593.46px;font-size:8.6px;color:#111;">1</div>
<div class="t" style="left:67.8px;top:603.06px;font-size:8.6px;color:#111;">0</div>
<div class="t" style="left:67.8px;top:640.56px;font-size:8.6px;color:#111;">2</div>
<div class="t" style="left:67.8px;top:650.16px;font-size:8.6px;color:#111;">2</div>
<div class="t" style="left:67.8px;top:659.76px;font-size:8.6px;color:#111;">0</div>
<div class="a" style="left:1131px;top:88px;width:14.5px;height:618.4px;background:linear-gradient(90deg,#e4e4e4,#f2f2f2 30%,#f0f0f0);"></div>
<div class="a" style="left:1145.7px;top:88px;width:1.2px;height:635px;background:#444;"></div>
<div class="a" style="left:1134.5px;top:96.5px;width:0;height:0;border-left:3.5px solid transparent;border-right:3.5px solid transparent;border-bottom:4px solid #444"></div>
<div class="a" style="left:1134.5px;top:696px;width:0;height:0;border-left:3.5px solid transparent;border-right:3.5px solid transparent;border-top:4px solid #444"></div>
<div class="a" style="left:1131.8px;top:397.2px;width:12.8px;height:14.4px;background:linear-gradient(90deg,#fbfbfb,#e6e6e6 35%,#cdcdcd 70%,#e2e2e2);border:1px solid #9a9a9a;border-radius:2px"></div>
<div class="a" style="left:64.5px;top:706.4px;width:1081px;height:16px;background:#ececec;"></div>
<div class="a" style="left:1130.5px;top:706.4px;width:15.2px;height:16.2px;background:#fdfdfd;"></div>
<div class="a" style="left:65.9px;top:708px;width:57.5px;height:14.5px;background:#fff;"></div>
<div class="t" style="left:71px;top:711.00px;font-size:10px;color:#000;letter-spacing:-0.144px;">200%</div>
<div class="a" style="left:113px;top:715px;width:0;height:0;border-left:3.5px solid transparent;border-right:3.5px solid transparent;border-top:4px solid #000"></div>
<div class="a" style="left:123.4px;top:708px;width:35px;height:14.5px;background:#d2d2d2;"></div>
<div class="a" style="left:200.5px;top:708px;width:35px;height:14.5px;background:#d2d2d2;"></div>
<svg style="left:128px;top:709px" width="110" height="12"><g fill="#8e8e8e"><rect x="3" y="1.500" width="1.500" height="9"/><path d="M10 1.500v9l-5-4.500z"/><path d="M26 1.500v9l-5-4.500z"/><path d="M81 1.500v9l5-4.500z"/><path d="M95.500 1.500v9l5-4.500z"/><rect x="101" y="1.500" width="1.500" height="9"/></g></svg>
<div class="a" style="left:158px;top:708px;width:42.5px;height:14.5px;background:#fff;"></div>
<div class="t" style="left:163px;top:711.00px;font-size:10px;color:#000;">1</div>
<div class="a" style="left:189.5px;top:715px;width:0;height:0;border-left:3.5px solid transparent;border-right:3.5px solid transparent;border-top:4px solid #000"></div>
<div class="a" style="left:235.7px;top:708px;width:177.3px;height:14.5px;background:linear-gradient(#e0e0e0,#d0d0d0);border:1px solid #c0c0c0"></div>
<div class="t" style="left:307.4px;top:710.50px;font-size:10px;color:#000;letter-spacing:0.043px;">Auswahl</div>
<div class="a" style="left:402.5px;top:710.5px;width:0;height:0;border-top:4.5px solid transparent;border-bottom:4.5px solid transparent;border-left:5.5px solid #000"></div>
<div class="a" style="left:420px;top:711.5px;width:0;height:0;border-top:3.5px solid transparent;border-bottom:3.5px solid transparent;border-right:4.5px solid #444"></div>
<div class="a" style="left:1120px;top:711.5px;width:0;height:0;border-top:3.5px solid transparent;border-bottom:3.5px solid transparent;border-left:4.5px solid #444"></div>
<div class="a" style="left:751px;top:708.5px;width:13.5px;height:13.5px;background:linear-gradient(#fafafa,#dadada);border:1px solid #9a9a9a;border-radius:2px"></div>
<div class="a" style="left:0px;top:722.6px;width:1366px;height:1.1px;background:#555;"></div>
<div class="a" style="left:0px;top:723.7px;width:1366px;height:3.3px;background:#dadada;"></div>
<div class="a" style="left:0px;top:727px;width:1366px;height:1px;background:#6e6e6e;"></div>
<div class="a" style="left:4px;top:36px;width:1px;height:688px;background:#5e5e5e;"></div>
<div class="a" style="left:5px;top:68px;width:59.5px;height:655px;background:#626262;"></div>
<div class="a" style="left:5px;top:80px;width:59.5px;height:478.5px;background:#d4d4d4;border-left:1px solid #efefef;border-right:1px solid #8e8e8e;border-bottom:1px solid #4a4a4a"></div>
<div class="a" style="left:5px;top:68px;width:59.5px;height:12.5px;background:linear-gradient(#3a3a3a,#585858);"></div>
<div class="a" style="left:10px;top:71.5px;width:0;height:0;border-top:3px solid transparent;border-bottom:3px solid transparent;border-right:3.5px solid #d0d0d0"></div>
<div class="a" style="left:14px;top:71.5px;width:0;height:0;border-top:3px solid transparent;border-bottom:3px solid transparent;border-right:3.5px solid #d0d0d0"></div>
<div class="a" style="left:9px;top:85px;width:52px;height:4px;background:repeating-linear-gradient(0deg,#d4d4d4 0 1px,transparent 1px 2px),repeating-linear-gradient(90deg,#9a9a9a 0 1px,transparent 1px 2px)"></div>
<div class="a" style="left:8px;top:141px;width:52px;height:1px;background:#b4b4b4;"></div>
<div class="a" style="left:8px;top:142px;width:52px;height:1px;background:#e6e6e6;"></div>
<div class="a" style="left:8px;top:229px;width:52px;height:1px;background:#b4b4b4;"></div>
<div class="a" style="left:8px;top:230px;width:52px;height:1px;background:#e6e6e6;"></div>
<div class="a" style="left:8px;top:296px;width:52px;height:1px;background:#b4b4b4;"></div>
<div class="a" style="left:8px;top:297px;width:52px;height:1px;background:#e6e6e6;"></div>
<div class="a" style="left:8px;top:342px;width:52px;height:1px;background:#b4b4b4;"></div>
<div class="a" style="left:8px;top:343px;width:52px;height:1px;background:#e6e6e6;"></div>
<div class="a" style="left:8px;top:367px;width:52px;height:1px;background:#b4b4b4;"></div>
<div class="a" style="left:8px;top:368px;width:52px;height:1px;background:#e6e6e6;"></div>
<div class="a" style="left:8px;top:413px;width:52px;height:1px;background:#b4b4b4;"></div>
<div class="a" style="left:8px;top:414px;width:52px;height:1px;background:#e6e6e6;"></div>
<div class="a" style="left:8px;top:512px;width:52px;height:1px;background:#b4b4b4;"></div>
<div class="a" style="left:8px;top:513px;width:52px;height:1px;background:#e6e6e6;"></div>
<div class="a" style="left:8px;top:532.5px;width:52px;height:1px;background:#b4b4b4;"></div>
<div class="a" style="left:8px;top:533.5px;width:52px;height:1px;background:#e6e6e6;"></div>
<div class="a" style="left:11.2px;top:98.3px;width:22.6px;height:19.4px;background:linear-gradient(#c2c2c2,#d0d0d0);border:1px solid #5e5e5e;border-radius:3px"></div>
<svg style="left:0;top:0" width="70" height="570"><g transform="translate(22.5,110) scale(0.86) translate(-10,-10)"><path d="M6 2 L6 17 L9.500 13.500 L12.300 19 L14.300 18 L11.700 12.600 L16.500 12.300 Z" fill="#0a0a0a"/></g><g transform="translate(47,110) scale(0.86) translate(-10,-10)"><path d="M6 2 L6 17 L9.500 13.500 L12.300 19 L14.300 18 L11.700 12.600 L16.500 12.300 Z" fill="#fff" stroke="#0a0a0a" stroke-width="1.100"/></g><path d="M56 116v3.500h-3.500z" fill="#222"/><g transform="translate(22.5,130) scale(0.86) translate(-10,-10)"><path d="M6 6 L17 17" stroke="#333" stroke-width="2"/><path d="M6 1v4M6 8v3M1 6h3.500M8 6h3M2.500 2.500l2 2M9.500 2.500l-2 2M2.500 9.500l2-2" stroke="#555" stroke-width="1"/></g><g transform="translate(47,130) scale(0.86) translate(-10,-10)"><path d="M3 7 Q3 2 10 2 Q18 2 17 7 Q16 11 9 11 Q3 11 3 7 Z" fill="none" stroke="#333" stroke-width="1.400"/><path d="M5 10 Q3 14 6 17" fill="none" stroke="#333" stroke-width="1.200"/><path d="M10 8 L10 18 L12.500 15.500 L14 19 L15.500 18.300 L14 15 L17 14.800 Z" fill="#fff" stroke="#111" stroke-width="0.900"/></g><g transform="translate(22.5,154) scale(0.86) translate(-10,-10)"><path d="M10 1 L13.500 8 Q14.500 12 12 15 L8 15 Q5.500 12 6.500 8 Z" fill="#fff" stroke="#111" stroke-width="1.200"/><path d="M10 5v6" stroke="#111"/><circle cx="10" cy="11" r="1.200" fill="#111"/><rect x="7" y="16" width="6" height="3" fill="#333"/></g><path d="M31.5 160v3.500h-3.500z" fill="#222"/><text x="47" y="160" font-family="Liberation Serif,serif" font-size="18.500" font-weight="bold" text-anchor="middle" fill="#0a0a0a">T</text><path d="M56 160v3.500h-3.500z" fill="#222"/><g transform="translate(22.5,176) scale(0.86) translate(-10,-10)"><path d="M3 3 L17 17" stroke="#222" stroke-width="1.400"/></g><defs><linearGradient id="rg" x1="0" y1="0" x2="1" y2="1"><stop offset="0" stop-color="#fff"/><stop offset="1" stop-color="#8e8e8e"/></linearGradient><linearGradient id="hg" x1="0" y1="0" x2="1" y2="0"><stop offset="0" stop-color="#fff"/><stop offset="1" stop-color="#111"/></linearGradient></defs><rect x="40" y="170.500" width="14" height="10.500" fill="url(#rg)" stroke="#666" stroke-width="1"/><path d="M56 182v3.500h-3.500z" fill="#222"/><g transform="translate(22.5,199) scale(0.86) translate(-10,-10)"><path d="M17 2 L9 11 L11 13 Z" fill="#555" stroke="#222" stroke-width="0.800"/><path d="M9 11 Q5 12 3 18 Q9 17 11 13 Z" fill="#888" stroke="#222" stroke-width="0.900"/></g><g transform="translate(47,199) scale(0.86) translate(-10,-10)"><path d="M15 2 L18 5 L8 15 L4 17 L5 12 Z" fill="#eee" stroke="#222" stroke-width="1"/><path d="M5 12 L8 15 L4 17Z" fill="#222"/></g><path d="M56 205v3.500h-3.500z" fill="#222"/><g transform="translate(22.5,220) scale(0.86) translate(-10,-10)"><path d="M2 8 L12 6 L13 14 L3 17 Z" fill="#f2f2f2" stroke="#222" stroke-width="1.200"/><path d="M18 2 L10 9 L12 11 Z" fill="#666" stroke="#222" stroke-width="0.700"/><path d="M10 9 Q7 10 6 14 Q10 13.500 12 11Z" fill="#999" stroke="#222" stroke-width="0.700"/></g><g transform="translate(47,220) scale(0.86) translate(-10,-10)"><path d="M8 5 L17 5 L12 13 L3 13 Z" fill="#f6f6f6" stroke="#222" stroke-width="1.100"/><path d="M3 13 L12 13 L12 16 L3 16Z M12 13 L17 5 L17 8 L12 16Z" fill="#bbb" stroke="#222" stroke-width="1"/></g><path d="M56 226v3.500h-3.500z" fill="#222"/><g transform="translate(22.5,243) scale(0.86) translate(-10,-10)"><circle cx="10" cy="10.500" r="6.500" fill="none" stroke="#222" stroke-width="1.300" stroke-dasharray="1.500 1.500"/><path d="M10 4 A6.500 6.500 0 0 0 3.500 10.500" fill="none" stroke="#222" stroke-width="1.400"/><path d="M8.500 1.500 L12 4 L8.500 6.500Z" fill="#222"/></g><path d="M31.5 249v3.500h-3.500z" fill="#222"/><g transform="translate(47,243) scale(0.86) translate(-10,-10)"><rect x="2.500" y="3.500" width="12" height="9" fill="#f4f4f4" stroke="#222"/><rect x="11.500" y="10.500" width="6" height="5" fill="#bbb" stroke="#555"/><path d="M5 6 L10 10.500 M5 6h3.500M5 6v3.500" stroke="#111" stroke-width="1.200" fill="none"/></g><path d="M56 249v3.500h-3.500z" fill="#222"/><g transform="translate(22.5,264) scale(0.86) translate(-10,-10)"><path d="M2 13 Q6 5 10 10 Q14 15 18 6" fill="none" stroke="#333" stroke-width="2.200"/><path d="M3 6 Q8 9 11 12 L17 18" fill="none" stroke="#222" stroke-width="1.100"/><circle cx="17" cy="18" r="1.400" fill="#fff" stroke="#222"/></g><path d="M31.5 270v3.500h-3.500z" fill="#222"/><g transform="translate(47,264) scale(0.86) translate(-10,-10)"><rect x="4.500" y="4.500" width="13" height="12" fill="none" stroke="#111" stroke-width="1.600" stroke-dasharray="2.500 2"/><path d="M3 3 L3 14 L6 11.500 L10.500 11 Z" fill="#222"/></g><g transform="translate(22.5,284) scale(0.86) translate(-10,-10)"><ellipse cx="7" cy="7" rx="5.500" ry="4.500" fill="#eee" stroke="#333"/><ellipse cx="12" cy="6.500" rx="4.500" ry="4" fill="#f8f8f8" stroke="#333"/><path d="M4 7h1M6.500 7h1M9 7h1" stroke="#222" stroke-width="1.300"/><path d="M10 9 L10 19 L12.500 16.500 L16.500 16.500 Z" fill="#fff" stroke="#111" stroke-width="1"/></g><path d="M31.5 290v3.500h-3.500z" fill="#222"/><g transform="translate(47,284) scale(0.86) translate(-10,-10)"><path d="M3 3 L3 17 L17 19 M3 3 L15 6 L15 18.700 M7 4 L7 17.600 M11 5 L11 18.200 M3 8 L15 10 M3 12.500 L15 14" fill="none" stroke="#444" stroke-width="1.100"/></g><path d="M56 290v3.500h-3.500z" fill="#222"/><g transform="translate(22.5,309) scale(0.86) translate(-10,-10)"><rect x="2.500" y="4.500" width="15" height="11" fill="#e4e4e4" stroke="#333"/><path d="M2.500 10 Q8 6 17.500 11 M8 4.500 Q11 10 8 15.500 M13 4.500 Q10 9 14 15.500" fill="none" stroke="#333" stroke-width="0.900"/></g><rect x="39.5" y="304" width="15" height="10.500" fill="url(#hg)" stroke="#555" stroke-width="0.800"/><g transform="translate(22.5,331) scale(0.86) translate(-10,-10)"><path d="M16 2 Q19 4 17 6 L14.500 8.500 L11.500 5.500 L14 3 Q15 1.500 16 2Z" fill="#222"/><path d="M12 7 L4 15 L3 18 L6 16.500 L13.500 8.500" fill="#ddd" stroke="#222" stroke-width="1"/></g><path d="M31.5 337v3.500h-3.500z" fill="#222"/><g transform="translate(47,331) scale(0.86) translate(-10,-10)"><rect x="2.500" y="2.500" width="5" height="5" fill="#eee" stroke="#444"/><circle cx="15" cy="15" r="3.300" fill="#ddd" stroke="#444"/><path d="M6 10h2M9 10h1.500M9 12.500h2M11.500 12h1M8.500 7.500h1.500" stroke="#555" stroke-width="1.400"/></g><path d="M56 337v3.500h-3.500z" fill="#222"/><g transform="translate(22.5,356) scale(0.86) translate(-10,-10)"><rect x="7.500" y="8.500" width="8" height="10" rx="1.500" fill="#eee" stroke="#222" stroke-width="1.100"/><rect x="9.500" y="5" width="4" height="3.500" fill="#555"/><circle cx="11.500" cy="13.500" r="2" fill="none" stroke="#222"/><path d="M2 3h1M4.500 2h1M3 5.500h1M6 4.500h1M1.500 7.500h1M5 7.500h1" stroke="#333" stroke-width="1.200"/></g><path d="M31.5 362v3.500h-3.500z" fill="#222"/><g transform="translate(47,356) scale(0.86) translate(-10,-10)"><path d="M3 2v15.500h15" fill="none" stroke="#333" stroke-width="1.200"/><rect x="5" y="9" width="3" height="8" fill="#888" stroke="#333" stroke-width="0.700"/><rect x="9.500" y="11" width="3" height="6" fill="#888" stroke="#333" stroke-width="0.700"/><rect x="14" y="5" width="3" height="12" fill="#888" stroke="#333" stroke-width="0.700"/></g><path d="M56 362v3.500h-3.500z" fill="#222"/><g transform="translate(22.5,381) scale(0.86) translate(-10,-10)"><rect x="5.500" y="5.500" width="9" height="9" fill="#e8e8e8" stroke="#222" stroke-width="1.100"/><path d="M3 1.500v3M3 15.500v3M17 1.500v3M17 15.500v3M1 3.500h3M16 3.500h3M1 16.500h3M16 16.500h3" stroke="#555" stroke-width="0.900"/></g><g transform="translate(47,381) scale(0.86) translate(-10,-10)"><path d="M17 2 L9 10 L11 12 Z" fill="#ccc" stroke="#222" stroke-width="0.900"/><path d="M10 9 L3 17 L6 16 L12 11Z" fill="#333"/><path d="M4 7 L15 15" stroke="#333" stroke-width="1"/></g><path d="M56 387v3.500h-3.500z" fill="#222"/><g transform="translate(22.5,401) scale(0.86) translate(-10,-10)"><path d="M5 11 L3 8 Q2 6.500 3.500 6.500 L6 9 L6 4 Q7 2.500 8 4 L8.500 8 L9 2.500 Q10 1.500 11 2.500 L11.300 8 L12.500 3.500 Q13.500 2.500 14.300 3.800 L14 9 L15.500 6 Q16.800 5.500 16.800 7 L15.500 13 Q14.500 17 13 18 L7.500 18 Q5.500 15 5 11Z" fill="#fff" stroke="#111" stroke-width="1.100"/></g><path d="M31.5 407v3.500h-3.500z" fill="#222"/><g transform="translate(47,401) scale(0.86) translate(-10,-10)"><circle cx="8" cy="7.500" r="5" fill="#e8e8e8" stroke="#222" stroke-width="1.600"/><path d="M11.500 11.500 L17.500 17.500" stroke="#111" stroke-width="2.800"/></g><g transform="translate(22.5,426) scale(0.86) translate(-10,-10)"><path d="M14 2 Q17 1 18 4 L7 15 L4 12 Z" fill="#fff" stroke="#111" stroke-width="1.200"/><path d="M4 12 L7 15 L2.500 17.500 Z" fill="#fff" stroke="#111" stroke-width="1.100"/><path d="M12.500 3.500l3 3" stroke="#111"/></g><rect x="27.500" y="459" width="28.500" height="28.500" fill="#fff" stroke="#111" stroke-width="1.100"/><rect x="35.500" y="467" width="12.500" height="12.500" fill="#d4d4d4" stroke="#111" stroke-width="1"/><path d="M28 487 L55.500 459.500" stroke="#c4093b" stroke-width="2.200"/><rect x="13" y="445" width="29" height="28" fill="#fee6cf" stroke="#111" stroke-width="1.200"/><path d="M47.500 447.500 Q52 446 53.500 451.500" fill="none" stroke="#222" stroke-width="1.300"/><path d="M46 445.500l3.500 1-1.500 3z M51.500 450.500l4 0-2 3.500z" fill="#222"/><rect x="14.500" y="477.500" width="6" height="6" fill="#fff" stroke="#222"/><rect x="17.500" y="480.500" width="6" height="6" fill="#fff" stroke="#222" stroke-width="1.600"/><rect x="9.500" y="493.500" width="15" height="16" rx="3" fill="#c8c8c8" stroke="#666"/><rect x="12" y="496" width="10" height="11" fill="#fee6cf" stroke="#aaa" stroke-width="0.600"/><rect x="28.500" y="496.500" width="9" height="11" fill="url(#hgl)" stroke="#999" stroke-width="0.600"/><defs><linearGradient id="hgl" x1="0" y1="0" x2="1" y2="0"><stop offset="0" stop-color="#fff"/><stop offset="1" stop-color="#666"/></linearGradient></defs><rect x="46.500" y="496.500" width="10" height="10" fill="#fff" stroke="#999" stroke-width="0.600"/><path d="M47 506 L56 497" stroke="#c4093b" stroke-width="1.800"/><rect x="9.500" y="514.500" width="15" height="15" rx="3" fill="#bdbdbd" stroke="#555"/><circle cx="16" cy="520.500" r="4.300" fill="#f4f4f4" stroke="#222" stroke-width="1.100"/><rect x="17" y="522" width="5.500" height="5.500" fill="#777" stroke="#222"/><circle cx="32.5" cy="520.500" r="4.300" fill="#f4f4f4" stroke="#222" stroke-width="1.100"/><rect x="33.5" y="522" width="5.500" height="5.500" fill="#999" stroke="#222"/><circle cx="50" cy="520.500" r="4.300" fill="#f4f4f4" stroke="#222" stroke-width="1.100"/><path d="M50 520.500 v-4.300 a4.300 4.300 0 0 1 4.300 4.300z" fill="#555"/><rect x="31.500" y="537.500" width="13" height="9" fill="#f8f8f8" stroke="#666"/><rect x="25.500" y="542" width="13" height="9" fill="#fff" stroke="#666"/></svg>
<div class="a" style="left:779.3px;top:116.5px;width:215.2px;height:240.5px;background:#d6d6d6;border:1px solid #5a5a5a;box-shadow:1px 1px 2px rgba(0,0,0,.35)"></div>
<div class="a" style="left:779.3px;top:116.5px;width:215.2px;height:11.5px;background:linear-gradient(#3c3c3c,#555);"></div>
<div class="a" style="left:969.5px;top:119.5px;width:0;height:0;border-top:3px solid transparent;border-bottom:3px solid transparent;border-right:3.5px solid #d8d8d8"></div>
<div class="a" style="left:973.5px;top:119.5px;width:0;height:0;border-top:3px solid transparent;border-bottom:3px solid transparent;border-right:3.5px solid #d8d8d8"></div>
<div class="a" style="left:980.5px;top:119px;width:1px;height:7px;background:#777;"></div>
<svg style="left:984px;top:119px" width="8" height="8"><path d="M1 1L7 7M7 1L1 7" stroke="#e0e0e0" stroke-width="1.500"/></svg>
<div class="a" style="left:780.3px;top:128px;width:213.2px;height:18.5px;background:linear-gradient(#a4a4a4,#8c8c8c);"></div>
<div class="a" style="left:780.3px;top:128px;width:58px;height:19px;background:#d6d6d6;border-right:1px solid #6e6e6e"></div>
<div class="a" style="left:784.3px;top:133.8px;width:0;height:0;border-left:2.5px solid transparent;border-right:2.5px solid transparent;border-bottom:3px solid #222"></div>
<div class="a" style="left:784.3px;top:138.2px;width:0;height:0;border-left:2.5px solid transparent;border-right:2.5px solid transparent;border-top:3px solid #222"></div>
<div class="t" style="left:792.6px;top:133.46px;font-size:10.4px;font-weight:bold;color:#333338;letter-spacing:-0.572px;">Zeichen</div>
<svg style="left:976px;top:133px" width="15" height="9"><path d="M0 2.500h4.500l-2.250 3z" fill="#222"/><path d="M5.500 1h8M5.500 3.500h8M5.500 6h8M5.500 8.500h8" stroke="#333" stroke-width="1"/></svg>
<div class="a" style="left:786px;top:153px;width:199px;height:17.5px;background:#fff;border:1px solid #f2f2f2;border-top-color:#dcdcdc"></div>
<div class="t" style="left:790.8px;top:156.69px;font-size:10px;color:#000;letter-spacing:-0.140px;">Valentina</div>
<div class="a" style="left:974.5px;top:160.5px;width:0;height:0;border-left:3.75px solid transparent;border-right:3.75px solid transparent;border-top:4.5px solid #000"></div>
<div class="a" style="left:786px;top:177px;width:199px;height:15.3px;background:#fff;border:1px solid #f2f2f2;border-top-color:#dcdcdc"></div>
<div class="t" style="left:790.8px;top:178.69px;font-size:10px;color:#000;letter-spacing:-0.117px;">Regular</div>
<div class="a" style="left:974.5px;top:183px;width:0;height:0;border-left:3.75px solid transparent;border-right:3.75px solid transparent;border-top:4.5px solid #000"></div>
<div class="a" style="left:786px;top:197px;width:199px;height:1px;background:#b9b9b9;"></div>
<div class="a" style="left:786px;top:198px;width:199px;height:1px;background:#ededed;"></div>
<div class="a" style="left:786px;top:249px;width:199px;height:1px;background:#b9b9b9;"></div>
<div class="a" style="left:786px;top:250px;width:199px;height:1px;background:#ededed;"></div>
<div class="a" style="left:786px;top:300.3px;width:199px;height:1px;background:#b9b9b9;"></div>
<div class="a" style="left:786px;top:301.3px;width:199px;height:1px;background:#ededed;"></div>
<div class="a" style="left:786px;top:325px;width:199px;height:1px;background:#b9b9b9;"></div>
<div class="a" style="left:786px;top:326px;width:199px;height:1px;background:#ededed;"></div>
<div class="a" style="left:808.4px;top:220px;width:73.2px;height:3.4px;background:#fff;"></div>
<div class="a" style="left:808.3px;top:203.5px;width:73.2px;height:17.5px;background:#fff;border:1px solid #f2f2f2;border-top-color:#dcdcdc"></div>
<div class="a" style="left:810.3px;top:205.5px;width:11px;height:13.5px;background:#f4f4f4;border:1px solid #c9c9c9"></div>
<div class="a" style="left:811.3px;top:211.75px;width:9px;height:1px;background:#c9c9c9;"></div>
<div class="a" style="left:813.3px;top:208px;width:0;height:0;border-left:2.5px solid transparent;border-right:2.5px solid transparent;border-bottom:3px solid #5656b4"></div>
<div class="a" style="left:813.3px;top:213.5px;width:0;height:0;border-left:2.5px solid transparent;border-right:2.5px solid transparent;border-top:3px solid #5656b4"></div>
<div class="t" style="left:828.6px;top:207.59px;font-size:10px;color:#000;letter-spacing:-0.168px;">14 pt</div>
<div class="a" style="left:870px;top:210.75px;width:0;height:0;border-left:3.75px solid transparent;border-right:3.75px solid transparent;border-top:4.5px solid #000"></div>
<div class="a" style="left:910.3px;top:203.5px;width:73.2px;height:17.5px;background:#fff;border:1px solid #f2f2f2;border-top-color:#dcdcdc"></div>
<div class="a" style="left:912.3px;top:205.5px;width:11px;height:13.5px;background:#f4f4f4;border:1px solid #c9c9c9"></div>
<div class="a" style="left:913.3px;top:211.75px;width:9px;height:1px;background:#c9c9c9;"></div>
<div class="a" style="left:915.3px;top:208px;width:0;height:0;border-left:2.5px solid transparent;border-right:2.5px solid transparent;border-bottom:3px solid #5656b4"></div>
<div class="a" style="left:915.3px;top:213.5px;width:0;height:0;border-left:2.5px solid transparent;border-right:2.5px solid transparent;border-top:3px solid #5656b4"></div>
<div class="t" style="left:929.9px;top:207.59px;font-size:10px;color:#000;letter-spacing:0.111px;">(16,8 pt</div>
<div class="a" style="left:972px;top:210.75px;width:0;height:0;border-left:3.75px solid transparent;border-right:3.75px solid transparent;border-top:4.5px solid #000"></div>
<div class="a" style="left:808.3px;top:225.4px;width:73.2px;height:17.6px;background:#fff;border:1px solid #f2f2f2;border-top-color:#dcdcdc"></div>
<div class="a" style="left:810.3px;top:227.4px;width:11px;height:13.6px;background:#f4f4f4;border:1px solid #c9c9c9"></div>
<div class="a" style="left:811.3px;top:233.7px;width:9px;height:1px;background:#c9c9c9;"></div>
<div class="a" style="left:813.3px;top:229.9px;width:0;height:0;border-left:2.5px solid transparent;border-right:2.5px solid transparent;border-bottom:3px solid #5656b4"></div>
<div class="a" style="left:813.3px;top:235.5px;width:0;height:0;border-left:2.5px solid transparent;border-right:2.5px solid transparent;border-top:3px solid #5656b4"></div>
<div class="t" style="left:828.6px;top:229.69px;font-size:10px;color:#000;letter-spacing:0.026px;">(0)</div>
<div class="a" style="left:870px;top:232.7px;width:0;height:0;border-left:3.75px solid transparent;border-right:3.75px solid transparent;border-top:4.5px solid #000"></div>
<div class="a" style="left:910.3px;top:225.4px;width:73.2px;height:17.6px;background:#fff;border:1px solid #f2f2f2;border-top-color:#dcdcdc"></div>
<div class="a" style="left:912.3px;top:227.4px;width:11px;height:13.6px;background:#f4f4f4;border:1px solid #c9c9c9"></div>
<div class="a" style="left:913.3px;top:233.7px;width:9px;height:1px;background:#c9c9c9;"></div>
<div class="a" style="left:915.3px;top:229.9px;width:0;height:0;border-left:2.5px solid transparent;border-right:2.5px solid transparent;border-bottom:3px solid #5656b4"></div>
<div class="a" style="left:915.3px;top:235.5px;width:0;height:0;border-left:2.5px solid transparent;border-right:2.5px solid transparent;border-top:3px solid #5656b4"></div>
<div class="t" style="left:929.9px;top:229.69px;font-size:10px;color:#000;letter-spacing:0.104px;">-4</div>
<div class="a" style="left:972px;top:232.7px;width:0;height:0;border-left:3.75px solid transparent;border-right:3.75px solid transparent;border-top:4.5px solid #000"></div>
<div class="a" style="left:808.3px;top:254.6px;width:73.2px;height:17.8px;background:#fff;border:1px solid #f2f2f2;border-top-color:#dcdcdc"></div>
<div class="a" style="left:810.3px;top:256.6px;width:11px;height:13.8px;background:#f4f4f4;border:1px solid #c9c9c9"></div>
<div class="a" style="left:811.3px;top:263px;width:9px;height:1px;background:#c9c9c9;"></div>
<div class="a" style="left:813.3px;top:259.1px;width:0;height:0;border-left:2.5px solid transparent;border-right:2.5px solid transparent;border-bottom:3px solid #5656b4"></div>
<div class="a" style="left:813.3px;top:264.9px;width:0;height:0;border-left:2.5px solid transparent;border-right:2.5px solid transparent;border-top:3px solid #5656b4"></div>
<div class="t" style="left:828.6px;top:258.50px;font-size:10px;color:#000;letter-spacing:-0.369px;">100%</div>
<div class="a" style="left:870px;top:262px;width:0;height:0;border-left:3.75px solid transparent;border-right:3.75px solid transparent;border-top:4.5px solid #000"></div>
<div class="a" style="left:910.3px;top:254.6px;width:73.2px;height:17.8px;background:#fff;border:1px solid #f2f2f2;border-top-color:#dcdcdc"></div>
<div class="a" style="left:912.3px;top:256.6px;width:11px;height:13.8px;background:#f4f4f4;border:1px solid #c9c9c9"></div>
<div class="a" style="left:913.3px;top:263px;width:9px;height:1px;background:#c9c9c9;"></div>
<div class="a" style="left:915.3px;top:259.1px;width:0;height:0;border-left:2.5px solid transparent;border-right:2.5px solid transparent;border-bottom:3px solid #5656b4"></div>
<div class="a" style="left:915.3px;top:264.9px;width:0;height:0;border-left:2.5px solid transparent;border-right:2.5px solid transparent;border-top:3px solid #5656b4"></div>
<div class="t" style="left:929.9px;top:258.50px;font-size:10px;color:#000;letter-spacing:-0.369px;">100%</div>
<div class="a" style="left:972px;top:262px;width:0;height:0;border-left:3.75px solid transparent;border-right:3.75px solid transparent;border-top:4.5px solid #000"></div>
<div class="a" style="left:808.3px;top:276.5px;width:73.2px;height:17.7px;background:#fff;border:1px solid #f2f2f2;border-top-color:#dcdcdc"></div>
<div class="a" style="left:810.3px;top:278.5px;width:11px;height:13.7px;background:#f4f4f4;border:1px solid #c9c9c9"></div>
<div class="a" style="left:811.3px;top:284.85px;width:9px;height:1px;background:#c9c9c9;"></div>
<div class="a" style="left:813.3px;top:281px;width:0;height:0;border-left:2.5px solid transparent;border-right:2.5px solid transparent;border-bottom:3px solid #5656b4"></div>
<div class="a" style="left:813.3px;top:286.7px;width:0;height:0;border-left:2.5px solid transparent;border-right:2.5px solid transparent;border-top:3px solid #5656b4"></div>
<div class="t" style="left:828.6px;top:280.19px;font-size:10px;color:#000;letter-spacing:0.055px;">0 pt</div>
<div class="a" style="left:870px;top:283.85px;width:0;height:0;border-left:3.75px solid transparent;border-right:3.75px solid transparent;border-top:4.5px solid #000"></div>
<div class="a" style="left:910.3px;top:276.5px;width:73.2px;height:17.7px;background:#fff;border:1px solid #f2f2f2;border-top-color:#dcdcdc"></div>
<div class="a" style="left:912.3px;top:278.5px;width:11px;height:13.7px;background:#f4f4f4;border:1px solid #c9c9c9"></div>
<div class="a" style="left:913.3px;top:284.85px;width:9px;height:1px;background:#c9c9c9;"></div>
<div class="a" style="left:915.3px;top:281px;width:0;height:0;border-left:2.5px solid transparent;border-right:2.5px solid transparent;border-bottom:3px solid #5656b4"></div>
<div class="a" style="left:915.3px;top:286.7px;width:0;height:0;border-left:2.5px solid transparent;border-right:2.5px solid transparent;border-top:3px solid #5656b4"></div>
<div class="t" style="left:929.9px;top:280.19px;font-size:10px;color:#000;letter-spacing:0.270px;">0°</div>
<div class="a" style="left:972px;top:283.85px;width:0;height:0;border-left:3.75px solid transparent;border-right:3.75px solid transparent;border-top:4.5px solid #000"></div>
<svg style="left:0;top:0" width="1000" height="360"><text x="789.500" y="219" font-family="Liberation Serif,serif" font-size="11" font-weight="bold" fill="#9a9a9a">T</text><text x="793.500" y="219.300" font-family="Liberation Serif,serif" font-size="20" font-weight="bold" fill="#111">T</text><text x="897" y="211.500" font-family="Liberation Sans,sans-serif" font-size="8.500" fill="#111">A</text><text x="897.500" y="221.500" font-family="Liberation Sans,sans-serif" font-size="9.500" font-weight="bold" fill="#111">A</text><path d="M895.500 213.500v8M894 215.500l1.500-2 1.500 2M894 219.500l1.500 2 1.500-2" fill="none" stroke="#111" stroke-width="0.900"/><path d="M897 212.500h8" stroke="#111" stroke-width="0.800"/><text x="789.500" y="237" font-family="Liberation Sans,sans-serif" font-size="10.500" fill="#222">A</text><text x="796.500" y="237" font-family="Liberation Sans,sans-serif" font-size="10.500" fill="#222">V</text><path d="M791 240.500h10M799 238.500l2.500 2-2.500 2" fill="none" stroke="#111" stroke-width="1"/><rect x="891" y="228" width="16" height="10" fill="#b0b0b0"/><text x="891.500" y="237" font-family="Liberation Sans,sans-serif" font-size="10.500" fill="#111">A</text><text x="899.500" y="237" font-family="Liberation Sans,sans-serif" font-size="10.500" fill="#111">V</text><path d="M892 241h14M894.500 239l-2.500 2 2.500 2M903.500 239l2.500 2-2.500 2" fill="none" stroke="#111" stroke-width="1"/><text x="789" y="267" font-family="Liberation Serif,serif" font-size="17" font-weight="bold" fill="#111" textLength="16" lengthAdjust="spacingAndGlyphs">T</text><path d="M789.500 270.500h15M792 268.500l-2.500 2 2.500 2M802 268.500l2.500 2-2.500 2" fill="none" stroke="#111" stroke-width="1"/><text x="896" y="270.500" font-family="Liberation Serif,serif" font-size="19" fill="#111">T</text><path d="M893.500 257.500v13M891.500 260l2-2.500 2 2.500M891.500 268l2 2.500 2-2.500" fill="none" stroke="#111" stroke-width="1"/><text x="789" y="290" font-family="Liberation Sans,sans-serif" font-size="11" fill="#111">A</text><text x="797.500" y="285" font-family="Liberation Sans,sans-serif" font-size="8.500" fill="#111">a</text><path d="M789.500 292h7" stroke="#111"/><path d="M800.500 286v7M798.500 288.500l2-2.500 2 2.500" fill="none" stroke="#111" stroke-width="1"/><circle cx="899" cy="285.500" r="6.300" fill="none" stroke="#222" stroke-width="1" stroke-dasharray="1.500 1.500"/><text x="896" y="289.500" font-family="Liberation Serif,serif" font-size="11" font-weight="bold" fill="#111">T</text><path d="M902.500 278.500l3 1-2 2z" fill="#111"/><text x="795" y="317" font-family="Liberation Serif,serif" font-size="12.500" font-weight="bold" fill="#111">T</text><path d="M794.500 318.800h9" stroke="#111" stroke-width="1"/><text x="821.500" y="318" font-family="Liberation Serif,serif" font-size="12.500" font-weight="bold" fill="#111">T</text><path d="M820.500 313.500h10" stroke="#111" stroke-width="1"/><text x="893" y="314" font-family="Liberation Sans,sans-serif" font-size="8.500" fill="#111">a</text><text x="898.500" y="318" font-family="Liberation Serif,serif" font-size="13" fill="#111">a</text></svg>
<div class="a" style="left:910.2px;top:303.6px;width:72.8px;height:17.3px;background:#fff;border:1px solid #f2f2f2;border-top-color:#dcdcdc"></div>
<div class="a" style="left:911.8px;top:305.2px;width:52.7px;height:14.2px;background:#fff;border:1px solid #d4d4d4"></div>
<div class="a" style="left:972px;top:311px;width:0;height:0;border-left:3.75px solid transparent;border-right:3.75px solid transparent;border-top:4.5px solid #000"></div>
<div class="t" style="left:793.4px;top:334.80px;font-size:10px;color:#000;letter-spacing:-0.003px;">Sprache:</div>
<div class="a" style="left:839px;top:330.8px;width:98px;height:17.2px;background:#fff;border:1px solid #f2f2f2;border-top-color:#dcdcdc"></div>
<div class="a" style="left:840.5px;top:332.3px;width:78px;height:14.2px;background:#fff;border:1px solid #d0d0d0"></div>
<div class="t" style="left:842.3px;top:334.80px;font-size:10px;color:#000;letter-spacing:0.048px;">Deutsch: Refor...</div>
<div class="a" style="left:925.5px;top:338.5px;width:0;height:0;border-left:3.75px solid transparent;border-right:3.75px solid transparent;border-top:4.5px solid #000"></div>
<div class="a" style="left:1146.5px;top:68px;width:215px;height:655px;background:#d6d6d6;"></div>
<div class="a" style="left:1146.5px;top:68px;width:215px;height:12px;background:linear-gradient(#383838,#545454);"></div>
<div class="a" style="left:1351.5px;top:71.5px;width:0;height:0;border-top:3px solid transparent;border-bottom:3px solid transparent;border-left:3.5px solid #d8d8d8"></div>
<div class="a" style="left:1355.5px;top:71.5px;width:0;height:0;border-top:3px solid transparent;border-bottom:3px solid transparent;border-left:3.5px solid #d8d8d8"></div>
<div class="a" style="left:1147px;top:80px;width:214.5px;height:18px;background:linear-gradient(#a2a2a2,#8a8a8a);"></div>
<div class="a" style="left:1147px;top:80px;width:48.7px;height:19px;background:#d6d6d6;border-right:1px solid #6a6a6a;border-top:1px solid #f0f0f0"></div>
<div class="t" style="left:1159.3px;top:84.68px;font-size:10.4px;font-weight:bold;color:#333338;letter-spacing:-0.624px;">Farbe</div>
<div class="a" style="left:1195.7px;top:80px;width:61.9px;height:18px;background:linear-gradient(#a6a6a6,#8e8e8e);border-right:1px solid #6a6a6a;border-top:1px solid #b8b8b8"></div>
<div class="t" style="left:1203px;top:84.68px;font-size:10.4px;font-weight:bold;color:#3e3e42;letter-spacing:-0.366px;">Farbfelder</div>
<div class="a" style="left:1257.6px;top:80px;width:56.8px;height:18px;background:linear-gradient(#a6a6a6,#8e8e8e);border-right:1px solid #6a6a6a;border-top:1px solid #b8b8b8"></div>
<div class="t" style="left:1265px;top:84.68px;font-size:10.4px;font-weight:bold;color:#3e3e42;letter-spacing:-0.302px;">Farbhilfe</div>
<div class="a" style="left:1152px;top:85.8px;width:0;height:0;border-left:2.5px solid transparent;border-right:2.5px solid transparent;border-bottom:3px solid #222"></div>
<div class="a" style="left:1152px;top:90.2px;width:0;height:0;border-left:2.5px solid transparent;border-right:2.5px solid transparent;border-top:3px solid #222"></div>
<svg style="left:1342.500px;top:85.5px" width="15" height="9"><path d="M0 2.500h4.500l-2.250 3z" fill="#222"/><path d="M5.500 1h8M5.500 3.500h8M5.500 6h8M5.500 8.500h8" stroke="#333" stroke-width="1"/></svg>
<svg style="left:0;top:0" width="1366" height="200"><rect x="1160.500" y="114.300" width="18" height="18" fill="#fff" stroke="#111"/><rect x="1165.500" y="119.300" width="8" height="8" fill="#d6d6d6" stroke="#111"/><path d="M1161 132 L1178 115" stroke="#c4093b" stroke-width="2"/><rect x="1151.500" y="105" width="18.500" height="18.500" fill="#fee6cf" stroke="#111" stroke-width="1.100"/><path d="M1152.500 141 L1157.500 138.500 L1163 141 L1163 147 L1157.800 149.800 L1152.500 147 Z" fill="#fff" stroke="#222"/><path d="M1152.500 141 L1157.800 143.500 L1157.800 149.800 L1152.500 147Z" fill="#777" stroke="#222" stroke-width="0.800"/><path d="M1157.800 143.500 L1163 141" stroke="#222" stroke-width="0.800"/><rect x="1167.500" y="138.500" width="12" height="12" fill="#fafad0" stroke="#9a9a9a"/><defs><linearGradient id="gC" x1="0" y1="0" x2="1" y2="0"><stop offset="0" stop-color="#fde6d2"/><stop offset="1" stop-color="#0c97c4"/></linearGradient><linearGradient id="gM" x1="0" y1="0" x2="1" y2="0"><stop offset="0" stop-color="#fdf0c8"/><stop offset="1" stop-color="#d8136a"/></linearGradient><linearGradient id="gY" x1="0" y1="0" x2="1" y2="0"><stop offset="0" stop-color="#fde4e0"/><stop offset="1" stop-color="#f7d417"/></linearGradient><linearGradient id="gK" x1="0" y1="0" x2="1" y2="0"><stop offset="0" stop-color="#fde6d0"/><stop offset="1" stop-color="#2a2220"/></linearGradient><linearGradient id="spec" x1="0" y1="0" x2="1" y2="0"><stop offset="0.080" stop-color="#e8261c"/><stop offset="0.200" stop-color="#f2e01a"/><stop offset="0.360" stop-color="#22a838"/><stop offset="0.540" stop-color="#1cb4e4"/><stop offset="0.700" stop-color="#2a3a9c"/><stop offset="0.830" stop-color="#d0208c"/><stop offset="0.920" stop-color="#e8202a"/></linearGradient><linearGradient id="specv" x1="0" y1="0" x2="0" y2="1"><stop offset="0" stop-color="#fff" stop-opacity="0.950"/><stop offset="0.420" stop-color="#fff" stop-opacity="0"/><stop offset="0.550" stop-color="#000" stop-opacity="0"/><stop offset="1" stop-color="#000" stop-opacity="1"/></linearGradient></defs><rect x="1203.500" y="106" width="100" height="5.500" fill="url(#gC)" stroke="#222" stroke-width="0.900"/><path d="M1203.8 113 l4 5.500 h-8z" fill="#e8e8e8" stroke="#555" stroke-width="0.900"/><rect x="1203.500" y="124.5" width="100" height="5.500" fill="url(#gM)" stroke="#222" stroke-width="0.900"/><path d="M1215.3 131.5 l4 5.500 h-8z" fill="#e8e8e8" stroke="#555" stroke-width="0.900"/><rect x="1203.500" y="142.5" width="100" height="5.500" fill="url(#gY)" stroke="#222" stroke-width="0.900"/><path d="M1226 149.5 l4 5.500 h-8z" fill="#e8e8e8" stroke="#555" stroke-width="0.900"/><rect x="1203.500" y="160.3" width="100" height="5.500" fill="url(#gK)" stroke="#222" stroke-width="0.900"/><path d="M1203.8 167.3 l4 5.500 h-8z" fill="#e8e8e8" stroke="#555" stroke-width="0.900"/><rect x="1152.500" y="175" width="199" height="15.500" fill="url(#spec)"/><rect x="1152.500" y="175" width="199" height="15.500" fill="url(#specv)"/><rect x="1152.500" y="175" width="15.500" height="15.500" fill="#fff"/><path d="M1153 190 L1167.500 175.500" stroke="#c4093b" stroke-width="2"/><rect x="1336" y="175" width="15.500" height="8" fill="#fff"/><rect x="1336" y="183" width="15.500" height="7.500" fill="#000"/><rect x="1152.500" y="175" width="199" height="15.500" fill="none" stroke="#222" stroke-width="1"/></svg>
<div class="t" style="left:1190px;top:105.16px;font-size:10.4px;font-weight:bold;color:#3a3a3a;">C</div>
<div class="a" style="left:1310px;top:101.5px;width:33px;height:16.5px;background:#fff;border:1px solid #e8e8e8;border-top-color:#cfcfcf"></div>
<div class="t" style="left:1315px;top:105.19px;font-size:10px;color:#000;">0</div>
<div class="t" style="left:1346px;top:104.86px;font-size:10.4px;color:#000;letter-spacing:-0.447px;">%</div>
<div class="t" style="left:1190px;top:123.66px;font-size:10.4px;font-weight:bold;color:#3a3a3a;">M</div>
<div class="a" style="left:1310px;top:120px;width:33px;height:16.5px;background:#fff;border:1px solid #e8e8e8;border-top-color:#cfcfcf"></div>
<div class="t" style="left:1315px;top:123.69px;font-size:10px;color:#000;letter-spacing:-0.180px;">11,9</div>
<div class="t" style="left:1346px;top:123.36px;font-size:10.4px;color:#000;letter-spacing:-0.447px;">%</div>
<div class="t" style="left:1190px;top:141.66px;font-size:10.4px;font-weight:bold;color:#3a3a3a;">Y</div>
<div class="a" style="left:1310px;top:138px;width:33px;height:16.5px;background:#fff;border:1px solid #e8e8e8;border-top-color:#cfcfcf"></div>
<div class="t" style="left:1315px;top:141.69px;font-size:10px;color:#000;letter-spacing:-0.445px;">23,25</div>
<div class="t" style="left:1346px;top:141.36px;font-size:10.4px;color:#000;letter-spacing:-0.447px;">%</div>
<div class="t" style="left:1190px;top:159.46px;font-size:10.4px;font-weight:bold;color:#3a3a3a;">K</div>
<div class="a" style="left:1310px;top:155.8px;width:33px;height:16.5px;background:#fff;border:1px solid #e8e8e8;border-top-color:#cfcfcf"></div>
<div class="t" style="left:1315px;top:159.50px;font-size:10px;color:#000;">0</div>
<div class="t" style="left:1346px;top:159.16px;font-size:10.4px;color:#000;letter-spacing:-0.447px;">%</div>
<div class="a" style="left:1146.5px;top:198.8px;width:214px;height:3.2px;background:#484848;"></div>
<div class="a" style="left:1147px;top:202px;width:214.5px;height:17.5px;background:linear-gradient(#a2a2a2,#8a8a8a);"></div>
<div class="a" style="left:1147px;top:202px;width:42.4px;height:18.5px;background:#d6d6d6;border-right:1px solid #6a6a6a;border-top:1px solid #f0f0f0"></div>
<div class="t" style="left:1154px;top:207.01px;font-size:10.4px;font-weight:bold;color:#333338;letter-spacing:-0.773px;">Pinsel</div>
<div class="a" style="left:1189.4px;top:202px;width:52.6px;height:17.5px;background:linear-gradient(#a6a6a6,#8e8e8e);border-right:1px solid #6a6a6a;border-top:1px solid #b8b8b8"></div>
<div class="t" style="left:1195px;top:207.01px;font-size:10.4px;font-weight:bold;color:#3e3e42;letter-spacing:-0.421px;">Symbole</div>
<div class="a" style="left:1242px;top:202px;width:65px;height:17.5px;background:linear-gradient(#a6a6a6,#8e8e8e);border-right:1px solid #6a6a6a;border-top:1px solid #b8b8b8"></div>
<div class="t" style="left:1250.6px;top:207.01px;font-size:10.4px;font-weight:bold;color:#3e3e42;letter-spacing:-0.170px;">Grafikstile</div>
<svg style="left:1342.500px;top:207.5px" width="15" height="9"><path d="M0 2.500h4.500l-2.250 3z" fill="#222"/><path d="M5.500 1h8M5.500 3.500h8M5.500 6h8M5.500 8.500h8" stroke="#333" stroke-width="1"/></svg>
<div class="a" style="left:1148.5px;top:220.3px;width:194.8px;height:99px;background:#fff;"></div>
<div class="a" style="left:1148.5px;top:220.2px;width:194.8px;height:1px;background:#333;"></div>
<div class="a" style="left:1180px;top:220.3px;width:1px;height:31.5px;background:#111;"></div>
<div class="a" style="left:1212.4px;top:220.3px;width:1px;height:31.5px;background:#111;"></div>
<div class="a" style="left:1244.6px;top:220.3px;width:1px;height:31.5px;background:#111;"></div>
<div class="a" style="left:1276.5px;top:220.3px;width:1px;height:31.5px;background:#111;"></div>
<div class="a" style="left:1308.8px;top:220.3px;width:1px;height:31.5px;background:#111;"></div>
<div class="a" style="left:1340.4px;top:220.3px;width:1px;height:31.5px;background:#111;"></div>
<div class="a" style="left:1148px;top:251.5px;width:192.5px;height:1px;background:#111;"></div>
<div class="a" style="left:1148px;top:284px;width:192.5px;height:1.2px;background:#111;"></div>
<div class="a" style="left:1148px;top:316px;width:192.5px;height:1px;background:#111;"></div>
<svg style="left:0;top:0" width="1366" height="330"><circle cx="1164.500" cy="236.500" r="0.900" fill="#111"/><ellipse cx="1196.400" cy="236.300" rx="2.300" ry="1.500" fill="#111" transform="rotate(15 1196.400 236.300)"/><path d="M1228.300 233.500v6" stroke="#bbb" stroke-width="0.800"/><path d="M1260.600 234.600l1.800 1.800-1.800 1.800-1.800-1.800z" fill="#111"/><circle cx="1292" cy="236.500" r="3.500" fill="#000"/><circle cx="1324.400" cy="236.800" r="7.500" fill="#000"/><rect x="1154.800" y="267.200" width="147.700" height="2.600" fill="#000"/><path d="M1157 301 Q1180 299 1210 300 Q1260 298.500 1300 300 L1338 300.500 Q1300 302.500 1260 301.800 Q1200 303 1157 301.800Z" fill="#111" stroke="#222" stroke-width="0.800"/></svg>
<div class="t" style="left:1308.8px;top:263.89px;font-size:10px;color:#000;letter-spacing:-0.094px;">Einfach</div>
<div class="a" style="left:1343.3px;top:220.3px;width:16px;height:96.5px;background:#ececec;border-left:1px solid #cfcfcf"></div>
<div class="a" style="left:1348px;top:228.3px;width:0;height:0;border-left:3.5px solid transparent;border-right:3.5px solid transparent;border-bottom:4px solid #444"></div>
<div class="a" style="left:1348px;top:308.8px;width:0;height:0;border-left:3.5px solid transparent;border-right:3.5px solid transparent;border-top:4px solid #444"></div>
<div class="a" style="left:1344.8px;top:238.8px;width:13.5px;height:13.8px;background:linear-gradient(90deg,#fbfbfb,#dcdcdc);border:1px solid #9c9c9c;border-radius:2px"></div>
<svg style="left:0;top:0" width="1366" height="340"><g stroke="#333" fill="#e8e8e8" stroke-width="1"><rect x="1158.500" y="320.500" width="8" height="7"/><rect x="1160.500" y="322.500" width="8" height="7"/><rect x="1162.500" y="324.500" width="8" height="7" fill="#bbb"/></g><path d="M1173 329.500v3h-3z" fill="#222"/><path d="M1225 321 L1235 332 M1235 321 L1225 332" stroke="#b2b2b2" stroke-width="1.600"/><path d="M1254 331 L1264 321" stroke="#aaa" stroke-width="2"/><path d="M1262 327.500h9M1262 330.500h9" stroke="#aaa" stroke-width="1.300"/><rect x="1294.500" y="322.500" width="8" height="9" fill="#fff" stroke="#222"/><rect x="1296.500" y="326.500" width="4.500" height="4.500" fill="#555"/><path d="M1325.500 324.500h8l-0.800 8h-6.400z" fill="#eee" stroke="#222"/><path d="M1324.500 323.500h10M1327.500 321.500h4" stroke="#222" stroke-width="1.300"/><path d="M1328 326v5M1331 326v5" stroke="#444"/><path d="M1352 333l6-6M1355 333l3-3" stroke="#999" stroke-width="1" stroke-dasharray="1 1"/></svg>
<div class="a" style="left:1146.5px;top:335.6px;width:214px;height:4.4px;background:#484848;"></div>
<div class="a" style="left:1147px;top:340px;width:214.5px;height:17px;background:linear-gradient(#a2a2a2,#8a8a8a);"></div>
<div class="a" style="left:1147px;top:340px;width:47.3px;height:18px;background:#d6d6d6;border-right:1px solid #6a6a6a;border-top:1px solid #f0f0f0"></div>
<div class="t" style="left:1154.4px;top:344.54px;font-size:10.4px;font-weight:bold;color:#333338;letter-spacing:-0.927px;">Ebenen</div>
<div class="a" style="left:1194.3px;top:340px;width:45.3px;height:17px;background:linear-gradient(#a6a6a6,#8e8e8e);border-right:1px solid #6a6a6a;border-top:1px solid #b8b8b8"></div>
<div class="t" style="left:1201.8px;top:344.54px;font-size:10.4px;font-weight:bold;color:#3e3e42;letter-spacing:-0.699px;">Absatz</div>
<svg style="left:1342.500px;top:345.5px" width="15" height="9"><path d="M0 2.500h4.500l-2.250 3z" fill="#222"/><path d="M5.500 1h8M5.500 3.500h8M5.500 6h8M5.500 8.500h8" stroke="#333" stroke-width="1"/></svg>
<div class="a" style="left:1148px;top:358px;width:195.3px;height:181.5px;background:#fff;"></div>
<div class="a" style="left:1148px;top:358px;width:45.5px;height:181.5px;background:#d9d9d9;"></div>
<div class="a" style="left:1193.2px;top:358px;width:1px;height:181.5px;background:#555;"></div>
<div class="a" style="left:1148px;top:357.6px;width:212px;height:1.2px;background:#2a2a2a;"></div>
<div class="a" style="left:1148.5px;top:359.2px;width:44.5px;height:1.2px;background:#f6f6f6;"></div>
<div class="a" style="left:1152.6px;top:362.4px;width:12.8px;height:14.2px;background:#d6d6d6;border:1px solid #f4f4f4;border-top-color:#a4a4a4;border-left-color:#a4a4a4"></div>
<div class="a" style="left:1169.8px;top:362.4px;width:11.6px;height:14.2px;background:#d6d6d6;border:1px solid #f4f4f4;border-top-color:#a4a4a4;border-left-color:#a4a4a4"></div>
<div class="a" style="left:1184.9px;top:362px;width:4.3px;height:15px;background:#10884c;"></div>
<div class="a" style="left:1189.5px;top:379.1px;width:4px;height:1px;background:#aaa;"></div>
<div class="a" style="left:1208.7px;top:359.8px;width:134.3px;height:19.4px;background:#3a8ee6;"></div>
<div class="a" style="left:1211px;top:361px;width:15.8px;height:15.4px;background:#fee6cf;border:1px solid #333"></div>
<div class="a" style="left:1212px;top:365.8px;width:13.8px;height:6px;background:linear-gradient(90deg,#7a3a30,#d8a080,#5a2a24,#c08060,#7a3a30);"></div>
<div class="t" style="left:1231px;top:364.46px;font-size:10.4px;font-weight:bold;color:#fff;letter-spacing:-0.098px;">Meine Ebene</div>
<div class="a" style="left:1334.7px;top:366.8px;width:5.3px;height:5.5px;background:#10884c;"></div>
<div class="a" style="left:1148.5px;top:379.2px;width:44.5px;height:1.2px;background:#f6f6f6;"></div>
<div class="a" style="left:1152.6px;top:382.4px;width:12.8px;height:14.2px;background:#d6d6d6;border:1px solid #f4f4f4;border-top-color:#a4a4a4;border-left-color:#a4a4a4"></div>
<div class="a" style="left:1169.8px;top:382.4px;width:11.6px;height:14.2px;background:#d6d6d6;border:1px solid #f4f4f4;border-top-color:#a4a4a4;border-left-color:#a4a4a4"></div>
<div class="a" style="left:1184.9px;top:382px;width:4.3px;height:15px;background:#10884c;"></div>
<div class="a" style="left:1189.5px;top:399.1px;width:4px;height:1px;background:#aaa;"></div>
<div class="a" style="left:1225px;top:399.2px;width:118px;height:1px;background:#8a8a8a;"></div>
<div class="a" style="left:1226px;top:381.6px;width:16px;height:15.6px;background:#fff;border:1px solid #222"></div>
<div class="a" style="left:1227px;top:389.3px;width:13px;height:1px;background:#c08a80;"></div>
<div class="t" style="left:1246.5px;top:384.50px;font-size:10px;color:#000;letter-spacing:-0.057px;">Schteuertstra...</div>
<div class="a" style="left:1148.5px;top:399.2px;width:44.5px;height:1.2px;background:#f6f6f6;"></div>
<div class="a" style="left:1152.6px;top:402.4px;width:12.8px;height:14.2px;background:#d6d6d6;border:1px solid #f4f4f4;border-top-color:#a4a4a4;border-left-color:#a4a4a4"></div>
<div class="a" style="left:1169.8px;top:402.4px;width:11.6px;height:14.2px;background:#d6d6d6;border:1px solid #f4f4f4;border-top-color:#a4a4a4;border-left-color:#a4a4a4"></div>
<div class="a" style="left:1184.9px;top:402px;width:4.3px;height:15px;background:#10884c;"></div>
<div class="a" style="left:1189.5px;top:419.1px;width:4px;height:1px;background:#aaa;"></div>
<div class="a" style="left:1225px;top:419.2px;width:118px;height:1px;background:#8a8a8a;"></div>
<div class="a" style="left:1226px;top:401.6px;width:16px;height:15.6px;background:#fff;border:1px solid #222"></div>
<div class="a" style="left:1227px;top:408.3px;width:13px;height:2.5px;background:#fdeee0;"></div>
<div class="t" style="left:1246.5px;top:404.50px;font-size:10px;color:#000;letter-spacing:-0.186px;">Adressrahmen</div>
<div class="a" style="left:1334px;top:405.8px;width:8px;height:8px;background:#10804a;border:1px solid #0a4a2a"></div>
<div class="a" style="left:1148.5px;top:419.2px;width:44.5px;height:1.2px;background:#f6f6f6;"></div>
<div class="a" style="left:1152.6px;top:422.4px;width:12.8px;height:14.2px;background:#d6d6d6;border:1px solid #f4f4f4;border-top-color:#a4a4a4;border-left-color:#a4a4a4"></div>
<div class="a" style="left:1169.8px;top:422.4px;width:11.6px;height:14.2px;background:#d6d6d6;border:1px solid #f4f4f4;border-top-color:#a4a4a4;border-left-color:#a4a4a4"></div>
<div class="a" style="left:1184.9px;top:422px;width:4.3px;height:15px;background:#10884c;"></div>
<div class="a" style="left:1189.5px;top:439.1px;width:4px;height:1px;background:#aaa;"></div>
<div class="a" style="left:1225px;top:439.2px;width:118px;height:1px;background:#8a8a8a;"></div>
<div class="a" style="left:1226px;top:421.6px;width:16px;height:15.6px;background:#fff;border:1px solid #222"></div>
<div class="a" style="left:1227px;top:424.8px;width:14px;height:9.5px;background:linear-gradient(90deg,#4a2018,#6a3020 25%,#e8d8c8 40%,#c09070 55%,#3a1814 70%,#2a1010);"></div>
<div class="t" style="left:1246.5px;top:424.50px;font-size:10px;color:#000;letter-spacing:0.147px;">Crew-Foto</div>
<div class="a" style="left:1148.5px;top:439.2px;width:44.5px;height:1.2px;background:#f6f6f6;"></div>
<div class="a" style="left:1152.6px;top:442.4px;width:12.8px;height:14.2px;background:#d6d6d6;border:1px solid #f4f4f4;border-top-color:#a4a4a4;border-left-color:#a4a4a4"></div>
<div class="a" style="left:1169.8px;top:442.4px;width:11.6px;height:14.2px;background:#d6d6d6;border:1px solid #f4f4f4;border-top-color:#a4a4a4;border-left-color:#a4a4a4"></div>
<div class="a" style="left:1184.9px;top:442px;width:4.3px;height:15px;background:#10884c;"></div>
<div class="a" style="left:1189.5px;top:459.1px;width:4px;height:1px;background:#aaa;"></div>
<div class="a" style="left:1225px;top:459.2px;width:118px;height:1px;background:#8a8a8a;"></div>
<div class="a" style="left:1226px;top:441.6px;width:16px;height:15.6px;background:#fee6cf;border:1px solid #222"></div>
<div class="t" style="left:1246.5px;top:444.50px;font-size:10px;color:#000;letter-spacing:-0.119px;">Bildrahmen 4</div>
<div class="a" style="left:1148.5px;top:459.2px;width:44.5px;height:1.2px;background:#f6f6f6;"></div>
<div class="a" style="left:1152.6px;top:462.4px;width:12.8px;height:14.2px;background:#d6d6d6;border:1px solid #f4f4f4;border-top-color:#a4a4a4;border-left-color:#a4a4a4"></div>
<div class="a" style="left:1169.8px;top:462.4px;width:11.6px;height:14.2px;background:#d6d6d6;border:1px solid #f4f4f4;border-top-color:#a4a4a4;border-left-color:#a4a4a4"></div>
<div class="a" style="left:1184.9px;top:462px;width:4.3px;height:15px;background:#10884c;"></div>
<div class="a" style="left:1189.5px;top:479.1px;width:4px;height:1px;background:#aaa;"></div>
<div class="a" style="left:1225px;top:479.2px;width:118px;height:1px;background:#8a8a8a;"></div>
<div class="a" style="left:1226px;top:461.6px;width:16px;height:15.6px;background:#fff;border:1px solid #222"></div>
<div class="a" style="left:1227px;top:469.3px;width:13px;height:1.2px;background:#a05a48;"></div>
<div class="t" style="left:1246.5px;top:464.50px;font-size:10px;color:#000;letter-spacing:0.055px;">La Trattoria O...</div>
<div class="a" style="left:1148.5px;top:479.2px;width:44.5px;height:1.2px;background:#f6f6f6;"></div>
<div class="a" style="left:1152.6px;top:482.4px;width:12.8px;height:14.2px;background:#d6d6d6;border:1px solid #f4f4f4;border-top-color:#a4a4a4;border-left-color:#a4a4a4"></div>
<div class="a" style="left:1169.8px;top:482.4px;width:11.6px;height:14.2px;background:#d6d6d6;border:1px solid #f4f4f4;border-top-color:#a4a4a4;border-left-color:#a4a4a4"></div>
<div class="a" style="left:1184.9px;top:482px;width:4.3px;height:15px;background:#10884c;"></div>
<div class="a" style="left:1189.5px;top:499.1px;width:4px;height:1px;background:#aaa;"></div>
<div class="a" style="left:1225px;top:499.2px;width:118px;height:1px;background:#8a8a8a;"></div>
<div class="a" style="left:1226px;top:481.6px;width:16px;height:15.6px;background:#fff;border:1px solid #222"></div>
<div class="a" style="left:1226.5px;top:487.3px;width:14px;height:5px;background:#fdebd8;"></div>
<div class="t" style="left:1246.5px;top:484.50px;font-size:10px;color:#000;letter-spacing:-0.185px;">Rechteck Rest...</div>
<div class="a" style="left:1148.5px;top:499.2px;width:44.5px;height:1.2px;background:#f6f6f6;"></div>
<div class="a" style="left:1152.6px;top:502.4px;width:12.8px;height:14.2px;background:#d6d6d6;border:1px solid #f4f4f4;border-top-color:#a4a4a4;border-left-color:#a4a4a4"></div>
<div class="a" style="left:1169.8px;top:502.4px;width:11.6px;height:14.2px;background:#d6d6d6;border:1px solid #f4f4f4;border-top-color:#a4a4a4;border-left-color:#a4a4a4"></div>
<div class="a" style="left:1184.9px;top:502px;width:4.3px;height:15px;background:#10884c;"></div>
<div class="a" style="left:1189.5px;top:519.1px;width:4px;height:1px;background:#aaa;"></div>
<div class="a" style="left:1225px;top:519.2px;width:118px;height:1px;background:#8a8a8a;"></div>
<div class="a" style="left:1226px;top:501.6px;width:16px;height:15.6px;background:#a06a58;border:1px solid #222"></div>
<div class="a" style="left:1227px;top:502.6px;width:14px;height:13.6px;background:repeating-linear-gradient(90deg,#9b5a3f 0 1.500px,#f6b993 1.500px 3px,#763d41 3px 4.500px,#fee6cf 4.500px 5.500px);"></div>
<div class="t" style="left:1246.5px;top:504.49px;font-size:10px;color:#000;letter-spacing:-0.316px;">Linien 4</div>
<div class="a" style="left:1148.5px;top:519.2px;width:44.5px;height:1.2px;background:#f6f6f6;"></div>
<div class="a" style="left:1152.6px;top:522.4px;width:12.8px;height:14.2px;background:#d6d6d6;border:1px solid #f4f4f4;border-top-color:#a4a4a4;border-left-color:#a4a4a4"></div>
<div class="a" style="left:1169.8px;top:522.4px;width:11.6px;height:14.2px;background:#d6d6d6;border:1px solid #f4f4f4;border-top-color:#a4a4a4;border-left-color:#a4a4a4"></div>
<div class="a" style="left:1184.9px;top:522px;width:4.3px;height:15px;background:#10884c;"></div>
<div class="a" style="left:1189.5px;top:539.1px;width:4px;height:1px;background:#aaa;"></div>
<div class="a" style="left:1225px;top:539.2px;width:118px;height:1px;background:#8a8a8a;"></div>
<div class="a" style="left:1226px;top:521.6px;width:16px;height:15.6px;background:#fff;border:1px solid #222"></div>
<div class="a" style="left:1231px;top:522.8px;width:5px;height:13px;background:linear-gradient(#c04030,#f0c0a0,#803020);"></div>
<div class="t" style="left:1246.5px;top:524.50px;font-size:10px;color:#000;letter-spacing:0.071px;">Schmuckrand 4</div>
<svg style="left:0;top:0" width="1366" height="545"><path d="M1153.400 369.4 Q1158.900 364.0 1164.500 369.4 Q1158.900 374.2 1153.400 369.4Z" fill="#f4f4f4" stroke="#111" stroke-width="0.900"/><circle cx="1158.900" cy="369.4" r="2.700" fill="#111"/><circle cx="1158" cy="368.6" r="0.800" fill="#fff"/><path d="M1153.400 368.6 Q1158.900 362.4 1164.500 368.6" fill="none" stroke="#111" stroke-width="1.500"/><path d="M1197 365.8h10.500l-5.250 8z" fill="#d8d8d8" stroke="#777" stroke-width="0.900"/><circle cx="1324.400" cy="369.6" r="3.800" fill="none" stroke="#0e2a5a" stroke-width="1.100"/><path d="M1336.500 359.8h6.500v6.500z" fill="#111"/><path d="M1153.400 389.4 Q1158.900 384.0 1164.500 389.4 Q1158.900 394.2 1153.400 389.4Z" fill="#f4f4f4" stroke="#111" stroke-width="0.900"/><circle cx="1158.900" cy="389.4" r="2.700" fill="#111"/><circle cx="1158" cy="388.6" r="0.800" fill="#fff"/><path d="M1153.400 388.6 Q1158.900 382.4 1164.500 388.6" fill="none" stroke="#111" stroke-width="1.500"/><circle cx="1324.400" cy="389.6" r="3.800" fill="none" stroke="#222" stroke-width="1.100"/><path d="M1153.400 409.4 Q1158.900 404.0 1164.500 409.4 Q1158.900 414.2 1153.400 409.4Z" fill="#f4f4f4" stroke="#111" stroke-width="0.900"/><circle cx="1158.900" cy="409.4" r="2.700" fill="#111"/><circle cx="1158" cy="408.6" r="0.800" fill="#fff"/><path d="M1153.400 408.6 Q1158.900 402.4 1164.500 408.6" fill="none" stroke="#111" stroke-width="1.500"/><circle cx="1324.400" cy="409.6" r="3.800" fill="none" stroke="#222" stroke-width="1.100"/><circle cx="1324.400" cy="409.6" r="6" fill="none" stroke="#222" stroke-width="1"/><path d="M1153.400 429.4 Q1158.900 424.0 1164.500 429.4 Q1158.900 434.2 1153.400 429.4Z" fill="#f4f4f4" stroke="#111" stroke-width="0.900"/><circle cx="1158.900" cy="429.4" r="2.700" fill="#111"/><circle cx="1158" cy="428.6" r="0.800" fill="#fff"/><path d="M1153.400 428.6 Q1158.900 422.4 1164.500 428.6" fill="none" stroke="#111" stroke-width="1.500"/><circle cx="1324.400" cy="429.6" r="3.800" fill="none" stroke="#222" stroke-width="1.100"/><path d="M1153.400 449.4 Q1158.900 444.0 1164.500 449.4 Q1158.900 454.2 1153.400 449.4Z" fill="#f4f4f4" stroke="#111" stroke-width="0.900"/><circle cx="1158.900" cy="449.4" r="2.700" fill="#111"/><circle cx="1158" cy="448.6" r="0.800" fill="#fff"/><path d="M1153.400 448.6 Q1158.900 442.4 1164.500 448.6" fill="none" stroke="#111" stroke-width="1.500"/><circle cx="1324.400" cy="449.6" r="3.800" fill="none" stroke="#222" stroke-width="1.100"/><path d="M1153.400 469.4 Q1158.900 464.0 1164.500 469.4 Q1158.900 474.2 1153.400 469.4Z" fill="#f4f4f4" stroke="#111" stroke-width="0.900"/><circle cx="1158.900" cy="469.4" r="2.700" fill="#111"/><circle cx="1158" cy="468.6" r="0.800" fill="#fff"/><path d="M1153.400 468.6 Q1158.900 462.4 1164.500 468.6" fill="none" stroke="#111" stroke-width="1.500"/><circle cx="1324.400" cy="469.6" r="3.800" fill="none" stroke="#222" stroke-width="1.100"/><path d="M1153.400 489.4 Q1158.900 484.0 1164.500 489.4 Q1158.900 494.2 1153.400 489.4Z" fill="#f4f4f4" stroke="#111" stroke-width="0.900"/><circle cx="1158.900" cy="489.4" r="2.700" fill="#111"/><circle cx="1158" cy="488.6" r="0.800" fill="#fff"/><path d="M1153.400 488.6 Q1158.900 482.4 1164.500 488.6" fill="none" stroke="#111" stroke-width="1.500"/><circle cx="1324.400" cy="489.6" r="3.800" fill="none" stroke="#222" stroke-width="1.100"/><path d="M1153.400 509.4 Q1158.900 504.0 1164.500 509.4 Q1158.900 514.2 1153.400 509.4Z" fill="#f4f4f4" stroke="#111" stroke-width="0.900"/><circle cx="1158.900" cy="509.4" r="2.700" fill="#111"/><circle cx="1158" cy="508.6" r="0.800" fill="#fff"/><path d="M1153.400 508.6 Q1158.900 502.4 1164.500 508.6" fill="none" stroke="#111" stroke-width="1.500"/><path d="M1214 504.3v11l5.500-5.500z" fill="#fff" stroke="#777" stroke-width="0.900"/><circle cx="1324.400" cy="509.6" r="3.800" fill="none" stroke="#222" stroke-width="1.100"/><path d="M1153.400 529.4 Q1158.900 524.0 1164.500 529.4 Q1158.900 534.2 1153.400 529.4Z" fill="#f4f4f4" stroke="#111" stroke-width="0.900"/><circle cx="1158.900" cy="529.4" r="2.700" fill="#111"/><circle cx="1158" cy="528.6" r="0.800" fill="#fff"/><path d="M1153.400 528.6 Q1158.900 522.4 1164.500 528.6" fill="none" stroke="#111" stroke-width="1.500"/><path d="M1214 524.3v11l5.500-5.500z" fill="#fff" stroke="#777" stroke-width="0.900"/><circle cx="1324.400" cy="529.6" r="3.800" fill="none" stroke="#222" stroke-width="1.100"/></svg>
<div class="a" style="left:1343.3px;top:358px;width:16px;height:181.5px;background:#ececec;border-left:1px solid #cfcfcf"></div>
<div class="a" style="left:1348px;top:366px;width:0;height:0;border-left:3.5px solid transparent;border-right:3.5px solid transparent;border-bottom:4px solid #444"></div>
<div class="a" style="left:1348px;top:531.5px;width:0;height:0;border-left:3.5px solid transparent;border-right:3.5px solid transparent;border-top:4px solid #444"></div>
<div class="a" style="left:1344.8px;top:376.4px;width:13.5px;height:15.4px;background:linear-gradient(90deg,#fbfbfb,#dcdcdc);border:1px solid #9c9c9c;border-radius:2px"></div>
<div class="a" style="left:1148px;top:539.5px;width:212px;height:1px;background:#6a6a6a;"></div>
<div class="t" style="left:1157.9px;top:543.30px;font-size:10px;color:#000;letter-spacing:-0.165px;">3 Ebenen</div>
<svg style="left:0;top:0" width="1366" height="560"><rect x="1229.500" y="543.500" width="6" height="6" fill="#fff" stroke="#333" stroke-dasharray="1 1"/><circle cx="1236.500" cy="550" r="3.800" fill="#ddd" stroke="#222"/><path d="M1236.500 550v-3.800a3.800 3.800 0 0 1 3.800 3.800z" fill="#222"/><path d="M1256 547.500h6M1260 545.500l2.500 2-2.500 2" fill="none" stroke="#111" stroke-width="1.100"/><rect x="1264.500" y="546.500" width="6" height="7" fill="#fff" stroke="#222"/><path d="M1268 543.500h4.500v8" fill="none" stroke="#222"/><rect x="1292.500" y="544.500" width="8" height="9" fill="#fff" stroke="#222"/><rect x="1294.500" y="548.500" width="4.500" height="4.500" fill="#555"/><path d="M1324.500 546.500h8l-0.800 8h-6.400z" fill="#eee" stroke="#222"/><path d="M1323.500 545.500h10M1326.500 543.500h4" stroke="#222" stroke-width="1.300"/><path d="M1327 548v5M1330 548v5" stroke="#444"/></svg>
<div class="a" style="left:1146.5px;top:556.8px;width:214px;height:4px;background:#484848;"></div>
<div class="a" style="left:1147px;top:560.7px;width:214.5px;height:16.5px;background:linear-gradient(#a2a2a2,#8a8a8a);"></div>
<div class="a" style="left:1147px;top:560.7px;width:57.6px;height:17.5px;background:#d6d6d6;border-right:1px solid #6a6a6a;border-top:1px solid #f0f0f0"></div>
<div class="t" style="left:1154.2px;top:565.67px;font-size:10.4px;font-weight:bold;color:#333338;letter-spacing:-0.888px;">Aussehen</div>
<div class="a" style="left:1204.6px;top:560.7px;width:49px;height:16.5px;background:linear-gradient(#a6a6a6,#8e8e8e);border-right:1px solid #6a6a6a;border-top:1px solid #b8b8b8"></div>
<div class="t" style="left:1212.3px;top:565.67px;font-size:10.4px;font-weight:bold;color:#3e3e42;letter-spacing:-0.155px;">Verlauf</div>
<div class="a" style="left:1253.6px;top:560.7px;width:67.2px;height:16.5px;background:linear-gradient(#a6a6a6,#8e8e8e);border-right:1px solid #6a6a6a;border-top:1px solid #b8b8b8"></div>
<div class="t" style="left:1260.9px;top:565.67px;font-size:10.4px;font-weight:bold;color:#3e3e42;letter-spacing:-0.479px;">Transparenz</div>
<svg style="left:1342.500px;top:566.2px" width="15" height="9"><path d="M0 2.500h4.500l-2.250 3z" fill="#222"/><path d="M5.500 1h8M5.500 3.500h8M5.500 6h8M5.500 8.500h8" stroke="#333" stroke-width="1"/></svg>
<div class="a" style="left:1147px;top:577.4px;width:214.5px;height:1px;background:#f0f0f0;"></div>
<div class="a" style="left:1146.5px;top:580.6px;width:214px;height:3.8px;background:#484848;"></div>
<div class="a" style="left:1147px;top:584.2px;width:214.5px;height:16.5px;background:linear-gradient(#a2a2a2,#8a8a8a);"></div>
<div class="a" style="left:1147px;top:584.2px;width:73px;height:17.5px;background:#d6d6d6;border-right:1px solid #6a6a6a;border-top:1px solid #f0f0f0"></div>
<div class="t" style="left:1159.4px;top:588.37px;font-size:10.4px;font-weight:bold;color:#333338;letter-spacing:-0.452px;">Ausrichten</div>
<div class="a" style="left:1220px;top:584.2px;width:63.9px;height:16.5px;background:linear-gradient(#a6a6a6,#8e8e8e);border-right:1px solid #6a6a6a;border-top:1px solid #b8b8b8"></div>
<div class="t" style="left:1227.3px;top:588.37px;font-size:10.4px;font-weight:bold;color:#3e3e42;letter-spacing:-0.313px;">Pathfinder</div>
<div class="a" style="left:1152px;top:590px;width:0;height:0;border-left:2.5px solid transparent;border-right:2.5px solid transparent;border-bottom:3px solid #222"></div>
<div class="a" style="left:1152px;top:594.4px;width:0;height:0;border-left:2.5px solid transparent;border-right:2.5px solid transparent;border-top:3px solid #222"></div>
<svg style="left:1342.500px;top:589.7px" width="15" height="9"><path d="M0 2.500h4.500l-2.250 3z" fill="#222"/><path d="M5.500 1h8M5.500 3.500h8M5.500 6h8M5.500 8.500h8" stroke="#333" stroke-width="1"/></svg>
<div class="t" style="left:1152.4px;top:606.96px;font-size:10.4px;color:#000;letter-spacing:-0.095px;">Objekte ausrichten:</div>
<div class="t" style="left:1152.4px;top:644.86px;font-size:10.4px;color:#000;letter-spacing:-0.063px;">Objekte verteilen:</div>
<div class="t" style="left:1152.4px;top:682.86px;font-size:10.4px;color:#000;letter-spacing:-0.147px;">Abstand verteilen:</div>
<div class="t" style="left:1287.2px;top:684.96px;font-size:10.4px;color:#000;letter-spacing:-0.135px;">Ausrichten an:</div>
<div class="a" style="left:1152px;top:640px;width:203px;height:1px;background:#b4b4b4;"></div>
<div class="a" style="left:1152px;top:641px;width:203px;height:1px;background:#ececec;"></div>
<div class="a" style="left:1152px;top:677.7px;width:203px;height:1px;background:#b4b4b4;"></div>
<div class="a" style="left:1152px;top:678.7px;width:203px;height:1px;background:#ececec;"></div>
<div class="a" style="left:1281.5px;top:684.6px;width:1px;height:28.5px;background:#b4b4b4;"></div>
<div class="a" style="left:1282.5px;top:684.6px;width:1px;height:28.5px;background:#ececec;"></div>
<svg style="left:0;top:0" width="1366" height="728"><path d="M1158.6 619.3v16" stroke="#111" stroke-width="1.400"/><rect x="1160.6" y="621.3" width="7" height="4.500" fill="#e8e8e8" stroke="#222" stroke-width="1"/><rect x="1160.6" y="628.3" width="13" height="4.500" fill="#e8e8e8" stroke="#222" stroke-width="1"/><path d="M1200.7 619.3v16" stroke="#111" stroke-width="1.200"/><rect x="1197.2" y="621.3" width="7" height="4.500" fill="#e8e8e8" stroke="#222" stroke-width="1"/><rect x="1194.2" y="628.3" width="13" height="4.500" fill="#e8e8e8" stroke="#222" stroke-width="1"/><path d="M1242.3 619.3v16" stroke="#111" stroke-width="1.400"/><rect x="1233.3" y="621.3" width="7" height="4.500" fill="#e8e8e8" stroke="#222" stroke-width="1"/><rect x="1227.3" y="628.3" width="13" height="4.500" fill="#e8e8e8" stroke="#222" stroke-width="1"/><path d="M1260.4 621.3h17" stroke="#111" stroke-width="1.400"/><rect x="1262.9" y="623.3" width="4.500" height="11" fill="#e8e8e8" stroke="#222" stroke-width="1"/><rect x="1270.4" y="623.3" width="4.500" height="5" fill="#e8e8e8" stroke="#222" stroke-width="1"/><path d="M1293.7 627.3h18" stroke="#111" stroke-width="1.200"/><rect x="1296.7" y="621.3" width="4.500" height="12" fill="#e8e8e8" stroke="#222" stroke-width="1"/><rect x="1304.7" y="624.8" width="4.500" height="5" fill="#e8e8e8" stroke="#222" stroke-width="1"/><path d="M1327.3 634.3h18" stroke="#111" stroke-width="1.400"/><rect x="1330.3" y="621.3" width="4.500" height="11.500" fill="#e8e8e8" stroke="#222" stroke-width="1"/><rect x="1338.3" y="627.3" width="4.500" height="5.500" fill="#e8e8e8" stroke="#222" stroke-width="1"/><path d="M1157.6 659.8h18M1157.6 666.8h18" stroke="#111" stroke-width="1.200"/><rect x="1162.6" y="660.8" width="8" height="3.500" fill="#e8e8e8" stroke="#222" stroke-width="1"/><rect x="1159.6" y="667.8" width="14" height="4" fill="#e8e8e8" stroke="#222" stroke-width="1"/><path d="M1191.7 661.8h18M1191.7 669.3h18" stroke="#111" stroke-width="1.200"/><rect x="1196.7" y="659.8" width="8" height="4" fill="#e8e8e8" stroke="#222" stroke-width="1"/><rect x="1193.7" y="667.3" width="14" height="4" fill="#e8e8e8" stroke="#222" stroke-width="1"/><path d="M1225.3 664.8h18M1225.3 671.8h18" stroke="#111" stroke-width="1.200"/><rect x="1230.3" y="660.8" width="8" height="3.500" fill="#e8e8e8" stroke="#222" stroke-width="1"/><rect x="1227.3" y="667.3" width="14" height="4" fill="#e8e8e8" stroke="#222" stroke-width="1"/><path d="M1262.4 658.8v14M1269.4 658.8v14" stroke="#111" stroke-width="1.200"/><rect x="1263.4" y="660.8" width="4" height="10" fill="#e8e8e8" stroke="#222" stroke-width="1"/><rect x="1270.4" y="662.8" width="3.500" height="6" fill="#e8e8e8" stroke="#222" stroke-width="1"/><path d="M1299.2 658.8v14M1306.7 658.8v14" stroke="#111" stroke-width="1.200"/><rect x="1297.2" y="660.8" width="4" height="10" fill="#e8e8e8" stroke="#222" stroke-width="1"/><rect x="1305.2" y="662.8" width="3.500" height="6" fill="#e8e8e8" stroke="#222" stroke-width="1"/><path d="M1335.3 658.8v14M1342.3 658.8v14" stroke="#111" stroke-width="1.200"/><rect x="1330.8" y="660.8" width="4" height="10" fill="#e8e8e8" stroke="#222" stroke-width="1"/><rect x="1338.3" y="662.8" width="3.500" height="6" fill="#e8e8e8" stroke="#222" stroke-width="1"/><path d="M1157.6 703.3h18M1157.6 707.3h18" stroke="#111" stroke-width="1.100"/><rect x="1160.6" y="698.3" width="12" height="4" fill="#e8e8e8" stroke="#222" stroke-width="1"/><rect x="1164.6" y="708.8" width="4" height="3" fill="#e8e8e8" stroke="#222" stroke-width="1"/><path d="M1198.7 698.3v14M1202.7 698.3v14" stroke="#111" stroke-width="1.100"/><rect x="1193.7" y="699.3" width="3.500" height="4" fill="#e8e8e8" stroke="#222" stroke-width="1"/><rect x="1204.2" y="700.3" width="4" height="11" fill="#e8e8e8" stroke="#222" stroke-width="1"/><rect x="1308.500" y="698.3" width="12" height="14" fill="#d0d0d0" stroke="#111" stroke-width="1.500" stroke-dasharray="2.500 1.600"/><path d="M1314.500 700.3l2 2.500h-4zM1314.500 710.3l2-2.500h-4zM1310 705.3l2.500-2v4zM1319 705.3l-2.500-2v4z" fill="#222"/><path d="M1325 703.8h5.400l-2.700 4z" fill="#111"/></svg>
<div class="a" style="left:1222.6px;top:696.8px;width:53px;height:18px;background:#dedede;border:1px solid #f4f4f4;border-top-color:#b8b8b8;border-left-color:#c8c8c8"></div>
<div class="a" style="left:1224.2px;top:698.3px;width:11.5px;height:15px;background:#ececec;border:1px solid #c8c8c8"></div>
<div class="a" style="left:1225.2px;top:705.3px;width:9.5px;height:1px;background:#c8c8c8;"></div>
<div class="a" style="left:1227.4px;top:700.8px;width:0;height:0;border-left:2.5px solid transparent;border-right:2.5px solid transparent;border-bottom:3px solid #bdbdbd"></div>
<div class="a" style="left:1227.4px;top:708.3px;width:0;height:0;border-left:2.5px solid transparent;border-right:2.5px solid transparent;border-top:3px solid #bdbdbd"></div>
<div class="a" style="left:1361.3px;top:36.5px;width:1.2px;height:686.5px;background:#555;"></div>
<div class="a" style="left:1362.5px;top:36.5px;width:3px;height:690px;background:#dcdcdc;"></div>
<div class="a" style="left:6px;top:92px;width:35px;height:32.2px;border:4.3px solid #f80404;border-radius:1.5px"></div>
<div class="a" style="left:32px;top:137px;width:34px;height:52.6px;border:4.3px solid #f80404;border-radius:1.5px"></div>
<div class="a" style="left:4.5px;top:435px;width:61.5px;height:60px;border:4.3px solid #f80404;border-radius:1.5px"></div>
<div class="a" style="left:780.4px;top:194.6px;width:107.6px;height:33.4px;border:4.5px solid #f80404;border-radius:1.5px"></div>
<svg style="left:0;top:0" width="1000" height="180"><path d="M781.500 125.200 H839.400 V146.700 H992.200 V173.800 H781.500 Z" fill="none" stroke="#f80404" stroke-width="4.500" stroke-linejoin="round"/></svg>
</div></body></html>
